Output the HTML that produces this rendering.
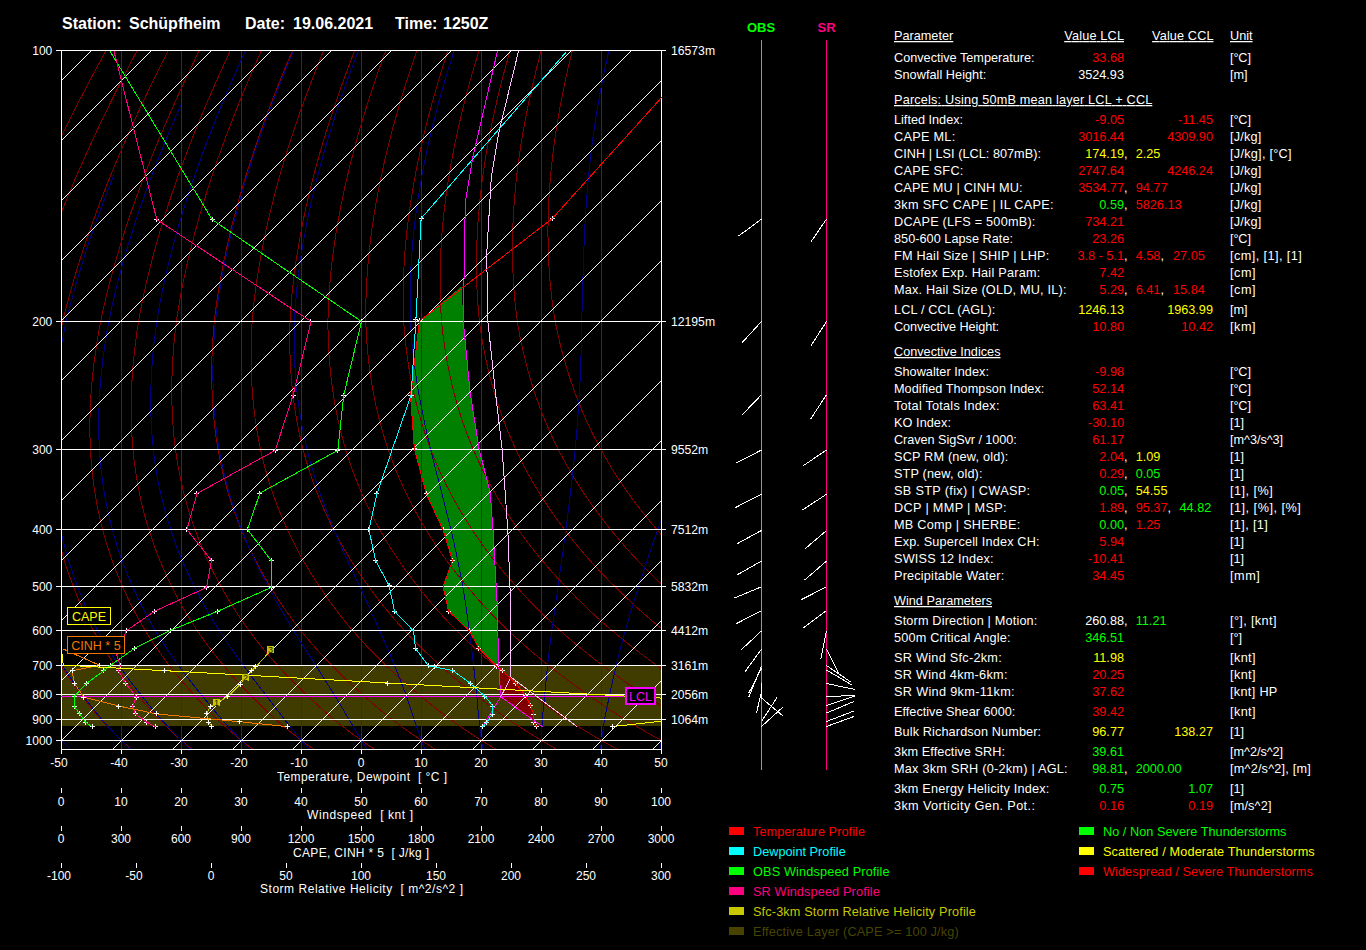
<!DOCTYPE html>
<html><head><meta charset="utf-8"><title>Skew-T Schüpfheim</title>
<style>
html,body{margin:0;padding:0;background:#000;width:1366px;height:950px;overflow:hidden}
svg{display:block;font-family:"Liberation Sans",sans-serif}
.tb text{font-size:12.7px}
</style></head><body>
<svg width="1366" height="950" viewBox="0 0 1366 950">
<rect width="1366" height="950" fill="#000"/>
<g shape-rendering="crispEdges">
<defs><clipPath id="pc"><rect x="61" y="50" width="601" height="700"/></clipPath></defs>
<rect x="61" y="665" width="601" height="61" fill="#403c00"/>
<polygon points="461.6,286.5 463.3,321.5 470,391.7 479.1,449 490.3,493.5 493,529.9 497,600.7 498.8,666.2 496.9,666.2 478.9,648.5 469.5,630.9 448.5,611.1 443.1,586.5 452.5,560.5 443.1,529.9 426.2,493.5 414.4,449 410.5,395.1 419.5,321" fill="#008000"/>
<polygon points="498.8,666.5 502.7,670.6 515.7,683.2 525.5,695.7 530.5,705.5 533.6,714 534.1,720.5 500.8,696.7" fill="#800000"/>
<path d="M121.5 50V749 M181.5 50V749 M241.5 50V749 M301.5 50V749 M361.5 50V749 M421.5 50V749 M481.5 50V749 M541.5 50V749 M601.5 50V749" stroke="#005000" stroke-width="1" fill="none"/>
<path clip-path="url(#pc)" d="M132.52 3.52 L128.48 10.55 L124.49 17.54 L120.56 24.49 L116.68 31.4 L112.84 38.27 L109.06 45.11 L105.32 51.92 L101.6 58.73 L97.92 65.5 L94.29 72.24 L90.72 78.94 L87.19 85.6 L83.72 92.22 L80.3 98.81 L76.92 105.37 L73.6 111.89 L70.32 118.37 L67.1 124.82 L63.92 131.23 L60.8 137.61 L57.72 143.95 L54.69 150.25 L51.72 156.53 L48.79 162.77 L45.91 168.97 L43.07 175.14 L40.29 181.28 L37.56 187.38 L34.87 193.45 L32.23 199.49 L29.64 205.49 L27.1 211.46 L24.6 217.4 L22.16 223.31 L19.76 229.18 L17.4 235.03 L15.1 240.84 L12.84 246.61 L10.63 252.36 L8.47 258.08 L6.35 263.76 L4.29 269.41 L2.26 275.04 L0.29 280.63 L-1.64 286.19 L-3.52 291.72 L-5.36 297.22 L-7.15 302.69 L-8.89 308.13 L-10.59 313.54 L-12.24 318.92 L-13.8 324.23 L-15.27 329.46 L-16.69 334.66 L-18.07 339.84 L-19.4 344.98 L-20.69 350.1 L-21.93 355.19 L-23.12 360.25 L-24.27 365.28 L-25.38 370.28 L-26.44 375.26 L-27.45 380.21 L-28.42 385.13 L-29.35 390.02 L-30.23 394.89 L-31.06 399.73 L-31.85 404.54 L-32.6 409.33 L-33.3 414.08 L-33.96 418.82 L-34.57 423.52 L-35.14 428.2 L-35.66 432.86 L-36.14 437.49 L-36.58 442.09 L-36.97 446.67 L-37.31 451.22 L-37.61 455.73 L-37.86 460.23 L-38.07 464.7 L-38.23 469.14 L-38.35 473.56 L-38.43 477.95 L-38.46 482.32 L-38.45 486.67 L-38.4 490.99 L-38.3 495.28 L-38.16 499.56 L-37.98 503.81 L-37.75 508.03 L-37.48 512.23 L-37.16 516.41 L-36.8 520.57 L-36.4 524.7 L-35.96 528.81 L-35.5 532.92 L-34.99 537.01 L-34.45 541.08 L-33.86 545.13 L-33.23 549.15 L-32.56 553.15 L-31.84 557.13 L-31.08 561.09 L-30.28 565.03 L-29.43 568.94 L-28.55 572.83 L-27.61 576.71 L-26.64 580.56 L-25.62 584.38 L-24.59 588.22 L-23.55 592.06 L-22.46 595.89 L-21.34 599.69 L-20.16 603.47 L-18.95 607.23 L-17.7 610.97 L-16.4 614.69 L-15.06 618.4 L-13.67 622.08 L-12.25 625.74 L-10.78 629.38 L-9.26 632.99 L-7.7 636.59 L-6.1 640.16 L-4.45 643.72 L-2.77 647.26 L-1.04 650.77 L0.74 654.27 L2.55 657.75 L4.41 661.21 L6.31 664.65 L8.23 668.09 L10.2 671.51 L12.2 674.92 L14.25 678.31 L16.34 681.68 L18.48 685.03 L20.65 688.36 L22.87 691.67 L25.12 694.98 L27.36 698.33 L29.63 701.66 L31.96 704.97 L34.32 708.26 L36.72 711.54 L39.17 714.8 L41.66 718.04 L44.24 721.23 L46.89 724.36 L49.59 727.47 L52.32 730.57 L55.11 733.65 L57.93 736.71 L60.8 739.76 L63.74 742.76 L66.74 745.73 L69.78 748.68 L72.86 751.62 M162.67 3.52 L158.77 10.55 L154.92 17.54 L151.12 24.49 L147.37 31.4 L143.68 38.27 L140.03 45.11 L136.43 51.92 L132.84 58.73 L129.3 65.5 L125.82 72.24 L122.38 78.94 L119 85.6 L115.66 92.22 L112.38 98.81 L109.15 105.37 L105.97 111.89 L102.84 118.37 L99.76 124.82 L96.73 131.23 L93.75 137.61 L90.82 143.95 L87.94 150.25 L85.11 156.53 L82.33 162.77 L79.59 168.97 L76.91 175.14 L74.28 181.28 L71.7 187.38 L69.16 193.45 L66.67 199.49 L64.24 205.49 L61.85 211.46 L59.51 217.4 L57.22 223.31 L54.97 229.18 L52.78 235.03 L50.63 240.84 L48.53 246.61 L46.48 252.36 L44.48 258.08 L42.52 263.76 L40.61 269.41 L38.75 275.04 L36.94 280.63 L35.17 286.19 L33.45 291.72 L31.78 297.22 L30.16 302.69 L28.58 308.13 L27.05 313.54 L25.56 318.92 L24.17 324.23 L22.87 329.46 L21.62 334.66 L20.41 339.84 L19.25 344.98 L18.14 350.1 L17.07 355.19 L16.05 360.25 L15.07 365.28 L14.14 370.28 L13.26 375.26 L12.42 380.21 L11.62 385.13 L10.88 390.02 L10.18 394.89 L9.52 399.73 L8.91 404.54 L8.34 409.33 L7.82 414.08 L7.35 418.82 L6.92 423.52 L6.54 428.2 L6.2 432.86 L5.9 437.49 L5.65 442.09 L5.45 446.67 L5.29 451.22 L5.19 455.73 L5.13 460.23 L5.11 464.7 L5.14 469.14 L5.21 473.56 L5.33 477.95 L5.49 482.32 L5.69 486.67 L5.94 490.99 L6.24 495.28 L6.58 499.56 L6.96 503.81 L7.39 508.03 L7.86 512.23 L8.38 516.41 L8.94 520.57 L9.54 524.7 L10.19 528.81 L10.86 532.92 L11.56 537.01 L12.31 541.08 L13.11 545.13 L13.95 549.15 L14.83 553.15 L15.76 557.13 L16.73 561.09 L17.75 565.03 L18.8 568.94 L19.91 572.83 L21.05 576.71 L22.24 580.56 L23.47 584.38 L24.73 588.22 L25.99 592.06 L27.29 595.89 L28.64 599.69 L30.03 603.47 L31.47 607.23 L32.95 610.97 L34.47 614.69 L36.04 618.4 L37.65 622.08 L39.31 625.74 L41 629.38 L42.75 632.99 L44.54 636.59 L46.38 640.16 L48.25 643.72 L50.17 647.26 L52.14 650.77 L54.15 654.27 L56.2 657.75 L58.3 661.21 L60.43 664.65 L62.6 668.09 L64.81 671.51 L67.05 674.92 L69.35 678.31 L71.68 681.68 L74.06 685.03 L76.49 688.36 L78.95 691.67 L81.45 694.98 L83.94 698.33 L86.47 701.66 L89.04 704.97 L91.66 708.26 L94.32 711.54 L97.02 714.8 L99.77 718.04 L102.6 721.23 L105.51 724.36 L108.47 727.47 L111.47 730.57 L114.51 733.65 L117.6 736.71 L120.73 739.76 L123.94 742.76 L127.2 745.73 L130.51 748.68 L133.87 751.62 M192.83 3.52 L189.06 10.55 L185.34 17.54 L181.68 24.49 L178.07 31.4 L174.51 38.27 L171 45.11 L167.54 51.92 L164.09 58.73 L160.69 65.5 L157.34 72.24 L154.04 78.94 L150.8 85.6 L147.61 92.22 L144.47 98.81 L141.38 105.37 L138.34 111.89 L135.35 118.37 L132.42 124.82 L129.53 131.23 L126.7 137.61 L123.92 143.95 L121.18 150.25 L118.5 156.53 L115.87 162.77 L113.28 168.97 L110.75 175.14 L108.27 181.28 L105.84 187.38 L103.45 193.45 L101.12 199.49 L98.83 205.49 L96.6 211.46 L94.41 217.4 L92.28 223.31 L90.19 229.18 L88.15 235.03 L86.16 240.84 L84.22 246.61 L82.32 252.36 L80.48 258.08 L78.68 263.76 L76.94 269.41 L75.24 275.04 L73.59 280.63 L71.98 286.19 L70.43 291.72 L68.92 297.22 L67.46 302.69 L66.05 308.13 L64.68 313.54 L63.37 318.92 L62.14 324.23 L61.01 329.46 L59.93 334.66 L58.89 339.84 L57.9 344.98 L56.96 350.1 L56.06 355.19 L55.21 360.25 L54.41 365.28 L53.66 370.28 L52.95 375.26 L52.28 380.21 L51.67 385.13 L51.1 390.02 L50.58 394.89 L50.1 399.73 L49.67 404.54 L49.29 409.33 L48.95 414.08 L48.66 418.82 L48.41 423.52 L48.21 428.2 L48.06 432.86 L47.95 437.49 L47.89 442.09 L47.87 446.67 L47.9 451.22 L47.98 455.73 L48.11 460.23 L48.29 464.7 L48.51 469.14 L48.77 473.56 L49.08 477.95 L49.44 482.32 L49.84 486.67 L50.29 490.99 L50.78 495.28 L51.31 499.56 L51.9 503.81 L52.52 508.03 L53.19 512.23 L53.91 516.41 L54.67 520.57 L55.48 524.7 L56.33 528.81 L57.21 532.92 L58.12 537.01 L59.08 541.08 L60.08 545.13 L61.13 549.15 L62.22 553.15 L63.36 557.13 L64.54 561.09 L65.77 565.03 L67.04 568.94 L68.36 572.83 L69.72 576.71 L71.12 580.56 L72.57 584.38 L74.04 588.22 L75.52 592.06 L77.05 595.89 L78.62 599.69 L80.23 603.47 L81.89 607.23 L83.6 610.97 L85.35 614.69 L87.14 618.4 L88.98 622.08 L90.86 625.74 L92.79 629.38 L94.76 632.99 L96.78 636.59 L98.85 640.16 L100.96 643.72 L103.12 647.26 L105.32 650.77 L107.56 654.27 L109.85 657.75 L112.18 661.21 L114.56 664.65 L116.97 668.09 L119.42 671.51 L121.91 674.92 L124.44 678.31 L127.02 681.68 L129.65 685.03 L132.32 688.36 L135.03 691.67 L137.78 694.98 L140.52 698.33 L143.3 701.66 L146.12 704.97 L148.99 708.26 L151.91 711.54 L154.87 714.8 L157.87 718.04 L160.96 721.23 L164.13 724.36 L167.35 727.47 L170.61 730.57 L173.92 733.65 L177.27 736.71 L180.67 739.76 L184.14 742.76 L187.67 745.73 L191.25 748.68 L194.87 751.62 M222.99 3.52 L219.35 10.55 L215.77 17.54 L212.24 24.49 L208.76 31.4 L205.34 38.27 L201.97 45.11 L198.64 51.92 L195.33 58.73 L192.07 65.5 L188.86 72.24 L185.71 78.94 L182.6 85.6 L179.55 92.22 L176.55 98.81 L173.61 105.37 L170.71 111.89 L167.87 118.37 L165.08 124.82 L162.34 131.23 L159.65 137.61 L157.01 143.95 L154.43 150.25 L151.89 156.53 L149.41 162.77 L146.97 168.97 L144.59 175.14 L142.26 181.28 L139.98 187.38 L137.74 193.45 L135.56 199.49 L133.43 205.49 L131.35 211.46 L129.32 217.4 L127.34 223.31 L125.4 229.18 L123.52 235.03 L121.69 240.84 L119.9 246.61 L118.17 252.36 L116.49 258.08 L114.85 263.76 L113.26 269.41 L111.72 275.04 L110.23 280.63 L108.79 286.19 L107.4 291.72 L106.06 297.22 L104.76 302.69 L103.52 308.13 L102.32 313.54 L101.17 318.92 L100.11 324.23 L99.15 329.46 L98.24 334.66 L97.37 339.84 L96.55 344.98 L95.78 350.1 L95.06 355.19 L94.38 360.25 L93.75 365.28 L93.17 370.28 L92.64 375.26 L92.15 380.21 L91.71 385.13 L91.32 390.02 L90.98 394.89 L90.68 399.73 L90.43 404.54 L90.23 409.33 L90.07 414.08 L89.96 418.82 L89.9 423.52 L89.89 428.2 L89.92 432.86 L89.99 437.49 L90.12 442.09 L90.29 446.67 L90.51 451.22 L90.78 455.73 L91.1 460.23 L91.47 464.7 L91.88 469.14 L92.33 473.56 L92.84 477.95 L93.39 482.32 L93.98 486.67 L94.63 490.99 L95.32 495.28 L96.05 499.56 L96.83 503.81 L97.66 508.03 L98.53 512.23 L99.45 516.41 L100.41 520.57 L101.42 524.7 L102.48 528.81 L103.56 532.92 L104.68 537.01 L105.84 541.08 L107.05 545.13 L108.31 549.15 L109.61 553.15 L110.96 557.13 L112.35 561.09 L113.79 565.03 L115.28 568.94 L116.81 572.83 L118.38 576.71 L120.01 580.56 L121.67 584.38 L123.36 588.22 L125.06 592.06 L126.81 595.89 L128.6 599.69 L130.43 603.47 L132.32 607.23 L134.24 610.97 L136.22 614.69 L138.24 618.4 L140.3 622.08 L142.41 625.74 L144.57 629.38 L146.77 632.99 L149.03 636.59 L151.32 640.16 L153.67 643.72 L156.06 647.26 L158.49 650.77 L160.97 654.27 L163.5 657.75 L166.07 661.21 L168.69 664.65 L171.34 668.09 L174.03 671.51 L176.76 674.92 L179.54 678.31 L182.36 681.68 L185.23 685.03 L188.15 688.36 L191.11 691.67 L194.11 694.98 L197.1 698.33 L200.13 701.66 L203.21 704.97 L206.33 708.26 L209.5 711.54 L212.71 714.8 L215.98 718.04 L219.33 721.23 L222.76 724.36 L226.23 727.47 L229.76 730.57 L233.32 733.65 L236.94 736.71 L240.6 739.76 L244.34 742.76 L248.14 745.73 L251.99 748.68 L255.88 751.62 M253.14 3.52 L249.64 10.55 L246.19 17.54 L242.8 24.49 L239.46 31.4 L236.17 38.27 L232.94 45.11 L229.75 51.92 L226.57 58.73 L223.45 65.5 L220.38 72.24 L217.37 78.94 L214.41 85.6 L211.5 92.22 L208.64 98.81 L205.84 105.37 L203.09 111.89 L200.39 118.37 L197.74 124.82 L195.14 131.23 L192.6 137.61 L190.11 143.95 L187.67 150.25 L185.28 156.53 L182.95 162.77 L180.66 168.97 L178.43 175.14 L176.25 181.28 L174.12 187.38 L172.04 193.45 L170.01 199.49 L168.03 205.49 L166.1 211.46 L164.22 217.4 L162.4 223.31 L160.62 229.18 L158.89 235.03 L157.22 240.84 L155.59 246.61 L154.02 252.36 L152.49 258.08 L151.01 263.76 L149.59 269.41 L148.21 275.04 L146.88 280.63 L145.61 286.19 L144.38 291.72 L143.2 297.22 L142.07 302.69 L140.99 308.13 L139.95 313.54 L138.97 318.92 L138.09 324.23 L137.29 329.46 L136.55 334.66 L135.85 339.84 L135.2 344.98 L134.6 350.1 L134.05 355.19 L133.55 360.25 L133.09 365.28 L132.69 370.28 L132.33 375.26 L132.02 380.21 L131.76 385.13 L131.55 390.02 L131.38 394.89 L131.26 399.73 L131.19 404.54 L131.17 409.33 L131.2 414.08 L131.27 418.82 L131.39 423.52 L131.56 428.2 L131.78 432.86 L132.04 437.49 L132.35 442.09 L132.71 446.67 L133.12 451.22 L133.58 455.73 L134.09 460.23 L134.64 464.7 L135.25 469.14 L135.9 473.56 L136.59 477.95 L137.34 482.32 L138.13 486.67 L138.97 490.99 L139.85 495.28 L140.79 499.56 L141.77 503.81 L142.79 508.03 L143.87 512.23 L144.99 516.41 L146.15 520.57 L147.37 524.7 L148.63 528.81 L149.91 532.92 L151.23 537.01 L152.61 541.08 L154.02 545.13 L155.49 549.15 L157 553.15 L158.56 557.13 L160.16 561.09 L161.82 565.03 L163.51 568.94 L165.26 572.83 L167.05 576.71 L168.89 580.56 L170.77 584.38 L172.68 588.22 L174.6 592.06 L176.56 595.89 L178.58 599.69 L180.63 603.47 L182.74 607.23 L184.89 610.97 L187.09 614.69 L189.33 618.4 L191.63 622.08 L193.96 625.74 L196.35 629.38 L198.78 632.99 L201.27 636.59 L203.8 640.16 L206.37 643.72 L209 647.26 L211.67 650.77 L214.39 654.27 L217.15 657.75 L219.96 661.21 L222.82 664.65 L225.71 668.09 L228.63 671.51 L231.61 674.92 L234.63 678.31 L237.7 681.68 L240.82 685.03 L243.98 688.36 L247.19 691.67 L250.44 694.98 L253.68 698.33 L256.96 701.66 L260.29 704.97 L263.67 708.26 L267.09 711.54 L270.56 714.8 L274.08 718.04 L277.69 721.23 L281.38 724.36 L285.12 727.47 L288.9 730.57 L292.73 733.65 L296.61 736.71 L300.54 739.76 L304.55 742.76 L308.61 745.73 L312.73 748.68 L316.89 751.62 M283.3 3.52 L279.93 10.55 L276.62 17.54 L273.36 24.49 L270.15 31.4 L267 38.27 L263.91 45.11 L260.86 51.92 L257.82 58.73 L254.84 65.5 L251.91 72.24 L249.03 78.94 L246.21 85.6 L243.44 92.22 L240.73 98.81 L238.07 105.37 L235.46 111.89 L232.9 118.37 L230.4 124.82 L227.95 131.23 L225.55 137.61 L223.21 143.95 L220.92 150.25 L218.68 156.53 L216.49 162.77 L214.35 168.97 L212.27 175.14 L210.24 181.28 L208.26 187.38 L206.33 193.45 L204.45 199.49 L202.63 205.49 L200.85 211.46 L199.13 217.4 L197.46 223.31 L195.84 229.18 L194.27 235.03 L192.75 240.84 L191.28 246.61 L189.86 252.36 L188.49 258.08 L187.18 263.76 L185.91 269.41 L184.7 275.04 L183.53 280.63 L182.42 286.19 L181.35 291.72 L180.34 297.22 L179.37 302.69 L178.46 308.13 L177.59 313.54 L176.78 318.92 L176.06 324.23 L175.43 329.46 L174.86 334.66 L174.33 339.84 L173.85 344.98 L173.42 350.1 L173.05 355.19 L172.72 360.25 L172.44 365.28 L172.2 370.28 L172.02 375.26 L171.89 380.21 L171.8 385.13 L171.77 390.02 L171.78 394.89 L171.84 399.73 L171.95 404.54 L172.11 409.33 L172.32 414.08 L172.58 418.82 L172.88 423.52 L173.23 428.2 L173.64 432.86 L174.08 437.49 L174.58 442.09 L175.13 446.67 L175.73 451.22 L176.38 455.73 L177.08 460.23 L177.82 464.7 L178.62 469.14 L179.46 473.56 L180.35 477.95 L181.29 482.32 L182.28 486.67 L183.31 490.99 L184.39 495.28 L185.52 499.56 L186.7 503.81 L187.93 508.03 L189.2 512.23 L190.52 516.41 L191.89 520.57 L193.31 524.7 L194.77 528.81 L196.26 532.92 L197.79 537.01 L199.37 541.08 L201 545.13 L202.67 549.15 L204.39 553.15 L206.16 557.13 L207.98 561.09 L209.84 565.03 L211.75 568.94 L213.71 572.83 L215.72 576.71 L217.77 580.56 L219.87 584.38 L222 588.22 L224.13 592.06 L226.32 595.89 L228.55 599.69 L230.83 603.47 L233.16 607.23 L235.54 610.97 L237.96 614.69 L240.43 618.4 L242.95 622.08 L245.52 625.74 L248.13 629.38 L250.8 632.99 L253.51 636.59 L256.27 640.16 L259.08 643.72 L261.94 647.26 L264.85 650.77 L267.8 654.27 L270.8 657.75 L273.85 661.21 L276.94 664.65 L280.07 668.09 L283.24 671.51 L286.46 674.92 L289.73 678.31 L293.04 681.68 L296.41 685.03 L299.82 688.36 L303.28 691.67 L306.77 694.98 L310.26 698.33 L313.79 701.66 L317.37 704.97 L321 708.26 L324.68 711.54 L328.41 714.8 L332.18 718.04 L336.05 721.23 L340 724.36 L344 727.47 L348.04 730.57 L352.14 733.65 L356.28 736.71 L360.47 739.76 L364.75 742.76 L369.08 745.73 L373.46 748.68 L377.89 751.62 M313.46 3.52 L310.22 10.55 L307.04 17.54 L303.92 24.49 L300.85 31.4 L297.84 38.27 L294.88 45.11 L291.96 51.92 L289.06 58.73 L286.22 65.5 L283.43 72.24 L280.69 78.94 L278.01 85.6 L275.39 92.22 L272.81 98.81 L270.3 105.37 L267.83 111.89 L265.42 118.37 L263.06 124.82 L260.76 131.23 L258.5 137.61 L256.31 143.95 L254.16 150.25 L252.07 156.53 L250.03 162.77 L248.04 168.97 L246.11 175.14 L244.23 181.28 L242.4 187.38 L240.62 193.45 L238.89 199.49 L237.22 205.49 L235.6 211.46 L234.03 217.4 L232.52 223.31 L231.05 229.18 L229.64 235.03 L228.28 240.84 L226.97 246.61 L225.71 252.36 L224.5 258.08 L223.34 263.76 L222.24 269.41 L221.18 275.04 L220.18 280.63 L219.23 286.19 L218.33 291.72 L217.48 297.22 L216.68 302.69 L215.93 308.13 L215.23 313.54 L214.58 318.92 L214.03 324.23 L213.57 329.46 L213.16 334.66 L212.81 339.84 L212.5 344.98 L212.25 350.1 L212.04 355.19 L211.88 360.25 L211.78 365.28 L211.72 370.28 L211.71 375.26 L211.76 380.21 L211.85 385.13 L211.99 390.02 L212.18 394.89 L212.42 399.73 L212.72 404.54 L213.06 409.33 L213.44 414.08 L213.88 418.82 L214.37 423.52 L214.91 428.2 L215.49 432.86 L216.13 437.49 L216.81 442.09 L217.55 446.67 L218.33 451.22 L219.17 455.73 L220.06 460.23 L221 464.7 L221.99 469.14 L223.02 473.56 L224.11 477.95 L225.24 482.32 L226.42 486.67 L227.65 490.99 L228.93 495.28 L230.26 499.56 L231.64 503.81 L233.06 508.03 L234.54 512.23 L236.06 516.41 L237.63 520.57 L239.25 524.7 L240.92 528.81 L242.61 532.92 L244.35 537.01 L246.13 541.08 L247.97 545.13 L249.85 549.15 L251.78 553.15 L253.76 557.13 L255.79 561.09 L257.86 565.03 L259.99 568.94 L262.16 572.83 L264.38 576.71 L266.65 580.56 L268.97 584.38 L271.31 588.22 L273.67 592.06 L276.08 595.89 L278.53 599.69 L281.03 603.47 L283.58 607.23 L286.18 610.97 L288.83 614.69 L291.53 618.4 L294.27 622.08 L297.07 625.74 L299.91 629.38 L302.81 632.99 L305.75 636.59 L308.75 640.16 L311.79 643.72 L314.88 647.26 L318.02 650.77 L321.21 654.27 L324.45 657.75 L327.74 661.21 L331.07 664.65 L334.44 668.09 L337.85 671.51 L341.31 674.92 L344.82 678.31 L348.38 681.68 L351.99 685.03 L355.65 688.36 L359.36 691.67 L363.1 694.98 L366.84 698.33 L370.62 701.66 L374.46 704.97 L378.34 708.26 L382.27 711.54 L386.26 714.8 L390.29 718.04 L394.41 721.23 L398.62 724.36 L402.88 727.47 L407.19 730.57 L411.54 733.65 L415.95 736.71 L420.41 739.76 L424.95 742.76 L429.55 745.73 L434.2 748.68 L438.9 751.62 M343.61 3.52 L340.51 10.55 L337.47 17.54 L334.48 24.49 L331.54 31.4 L328.67 38.27 L325.85 45.11 L323.07 51.92 L320.31 58.73 L317.6 65.5 L314.95 72.24 L312.36 78.94 L309.82 85.6 L307.33 92.22 L304.9 98.81 L302.52 105.37 L300.2 111.89 L297.93 118.37 L295.72 124.82 L293.56 131.23 L291.45 137.61 L289.4 143.95 L287.4 150.25 L285.46 156.53 L283.57 162.77 L281.73 168.97 L279.95 175.14 L278.21 181.28 L276.54 187.38 L274.91 193.45 L273.34 199.49 L271.82 205.49 L270.35 211.46 L268.94 217.4 L267.58 223.31 L266.27 229.18 L265.01 235.03 L263.81 240.84 L262.65 246.61 L261.55 252.36 L260.5 258.08 L259.51 263.76 L258.56 269.41 L257.67 275.04 L256.83 280.63 L256.04 286.19 L255.3 291.72 L254.61 297.22 L253.98 302.69 L253.4 308.13 L252.86 313.54 L252.38 318.92 L252 324.23 L251.71 329.46 L251.47 334.66 L251.29 339.84 L251.15 344.98 L251.07 350.1 L251.03 355.19 L251.05 360.25 L251.12 365.28 L251.24 370.28 L251.41 375.26 L251.62 380.21 L251.89 385.13 L252.21 390.02 L252.58 394.89 L253.01 399.73 L253.48 404.54 L254 409.33 L254.57 414.08 L255.19 418.82 L255.86 423.52 L256.58 428.2 L257.35 432.86 L258.18 437.49 L259.05 442.09 L259.97 446.67 L260.94 451.22 L261.97 455.73 L263.05 460.23 L264.18 464.7 L265.36 469.14 L266.59 473.56 L267.86 477.95 L269.19 482.32 L270.57 486.67 L271.99 490.99 L273.47 495.28 L275 499.56 L276.57 503.81 L278.2 508.03 L279.87 512.23 L281.6 516.41 L283.37 520.57 L285.19 524.7 L287.06 528.81 L288.96 532.92 L290.9 537.01 L292.9 541.08 L294.94 545.13 L297.03 549.15 L299.17 553.15 L301.36 557.13 L303.6 561.09 L305.89 565.03 L308.23 568.94 L310.61 572.83 L313.05 576.71 L315.54 580.56 L318.07 584.38 L320.63 588.22 L323.21 592.06 L325.83 595.89 L328.51 599.69 L331.23 603.47 L334.01 607.23 L336.83 610.97 L339.7 614.69 L342.63 618.4 L345.6 622.08 L348.62 625.74 L351.69 629.38 L354.82 632.99 L357.99 636.59 L361.22 640.16 L364.5 643.72 L367.82 647.26 L371.2 650.77 L374.62 654.27 L378.1 657.75 L381.62 661.21 L385.2 664.65 L388.81 668.09 L392.46 671.51 L396.17 674.92 L399.92 678.31 L403.72 681.68 L407.58 685.03 L411.48 688.36 L415.44 691.67 L419.43 694.98 L423.42 698.33 L427.45 701.66 L431.54 704.97 L435.68 708.26 L439.87 711.54 L444.11 714.8 L448.39 718.04 L452.78 721.23 L457.24 724.36 L461.76 727.47 L466.33 730.57 L470.95 733.65 L475.62 736.71 L480.34 739.76 L485.15 742.76 L490.02 745.73 L494.94 748.68 L499.91 751.62 M373.77 3.52 L370.8 10.55 L367.89 17.54 L365.04 24.49 L362.24 31.4 L359.5 38.27 L356.81 45.11 L354.18 51.92 L351.55 58.73 L348.99 65.5 L346.48 72.24 L344.02 78.94 L341.62 85.6 L339.28 92.22 L336.99 98.81 L334.75 105.37 L332.57 111.89 L330.45 118.37 L328.38 124.82 L326.37 131.23 L324.41 137.61 L322.5 143.95 L320.65 150.25 L318.85 156.53 L317.11 162.77 L315.42 168.97 L313.78 175.14 L312.2 181.28 L310.68 187.38 L309.2 193.45 L307.78 199.49 L306.42 205.49 L305.1 211.46 L303.84 217.4 L302.64 223.31 L301.48 229.18 L300.38 235.03 L299.33 240.84 L298.34 246.61 L297.4 252.36 L296.51 258.08 L295.67 263.76 L294.89 269.41 L294.16 275.04 L293.48 280.63 L292.85 286.19 L292.28 291.72 L291.75 297.22 L291.28 302.69 L290.87 308.13 L290.5 313.54 L290.19 318.92 L289.97 324.23 L289.85 329.46 L289.78 334.66 L289.77 339.84 L289.8 344.98 L289.89 350.1 L290.03 355.19 L290.22 360.25 L290.46 365.28 L290.75 370.28 L291.1 375.26 L291.49 380.21 L291.94 385.13 L292.44 390.02 L292.99 394.89 L293.59 399.73 L294.24 404.54 L294.94 409.33 L295.69 414.08 L296.5 418.82 L297.35 423.52 L298.26 428.2 L299.21 432.86 L300.22 437.49 L301.28 442.09 L302.39 446.67 L303.55 451.22 L304.77 455.73 L306.04 460.23 L307.36 464.7 L308.73 469.14 L310.15 473.56 L311.62 477.95 L313.14 482.32 L314.71 486.67 L316.34 490.99 L318.01 495.28 L319.73 499.56 L321.51 503.81 L323.33 508.03 L325.21 512.23 L327.13 516.41 L329.11 520.57 L331.13 524.7 L333.21 528.81 L335.31 532.92 L337.46 537.01 L339.66 541.08 L341.91 545.13 L344.21 549.15 L346.56 553.15 L348.96 557.13 L351.41 561.09 L353.91 565.03 L356.46 568.94 L359.06 572.83 L361.72 576.71 L364.42 580.56 L367.17 584.38 L369.95 588.22 L372.74 592.06 L375.59 595.89 L378.49 599.69 L381.43 603.47 L384.43 607.23 L387.48 610.97 L390.58 614.69 L393.72 618.4 L396.92 622.08 L400.17 625.74 L403.47 629.38 L406.83 632.99 L410.24 636.59 L413.7 640.16 L417.2 643.72 L420.76 647.26 L424.38 650.77 L428.04 654.27 L431.75 657.75 L435.51 661.21 L439.33 664.65 L443.18 668.09 L447.07 671.51 L451.02 674.92 L455.02 678.31 L459.06 681.68 L463.16 685.03 L467.32 688.36 L471.52 691.67 L475.76 694.98 L480 698.33 L484.29 701.66 L488.63 704.97 L493.02 708.26 L497.46 711.54 L501.95 714.8 L506.5 718.04 L511.14 721.23 L515.87 724.36 L520.64 727.47 L525.47 730.57 L530.36 733.65 L535.29 736.71 L540.28 739.76 L545.35 742.76 L550.49 745.73 L555.68 748.68 L560.92 751.62 M403.93 3.52 L401.09 10.55 L398.32 17.54 L395.6 24.49 L392.94 31.4 L390.33 38.27 L387.78 45.11 L385.28 51.92 L382.8 58.73 L380.37 65.5 L378 72.24 L375.68 78.94 L373.42 85.6 L371.22 92.22 L369.07 98.81 L366.98 105.37 L364.95 111.89 L362.97 118.37 L361.04 124.82 L359.17 131.23 L357.36 137.61 L355.6 143.95 L353.89 150.25 L352.24 156.53 L350.65 162.77 L349.11 168.97 L347.62 175.14 L346.19 181.28 L344.82 187.38 L343.49 193.45 L342.23 199.49 L341.01 205.49 L339.85 211.46 L338.75 217.4 L337.7 223.31 L336.7 229.18 L335.75 235.03 L334.86 240.84 L334.03 246.61 L333.24 252.36 L332.51 258.08 L331.84 263.76 L331.21 269.41 L330.64 275.04 L330.13 280.63 L329.66 286.19 L329.25 291.72 L328.89 297.22 L328.59 302.69 L328.34 308.13 L328.14 313.54 L327.99 318.92 L327.94 324.23 L327.99 329.46 L328.09 334.66 L328.25 339.84 L328.45 344.98 L328.71 350.1 L329.02 355.19 L329.39 360.25 L329.8 365.28 L330.27 370.28 L330.79 375.26 L331.36 380.21 L331.98 385.13 L332.66 390.02 L333.39 394.89 L334.17 399.73 L335 404.54 L335.88 409.33 L336.82 414.08 L337.8 418.82 L338.84 423.52 L339.93 428.2 L341.07 432.86 L342.27 437.49 L343.51 442.09 L344.81 446.67 L346.16 451.22 L347.57 455.73 L349.03 460.23 L350.54 464.7 L352.1 469.14 L353.71 473.56 L355.38 477.95 L357.09 482.32 L358.86 486.67 L360.68 490.99 L362.55 495.28 L364.47 499.56 L366.44 503.81 L368.47 508.03 L370.54 512.23 L372.67 516.41 L374.85 520.57 L377.08 524.7 L379.36 528.81 L381.66 532.92 L384.02 537.01 L386.42 541.08 L388.88 545.13 L391.39 549.15 L393.95 553.15 L396.56 557.13 L399.22 561.09 L401.93 565.03 L404.7 568.94 L407.52 572.83 L410.38 576.71 L413.3 580.56 L416.27 584.38 L419.27 588.22 L422.28 592.06 L425.35 595.89 L428.46 599.69 L431.63 603.47 L434.85 607.23 L438.12 610.97 L441.45 614.69 L444.82 618.4 L448.25 622.08 L451.73 625.74 L455.25 629.38 L458.84 632.99 L462.48 636.59 L466.17 640.16 L469.91 643.72 L473.71 647.26 L477.55 650.77 L481.45 654.27 L485.4 657.75 L489.4 661.21 L493.45 664.65 L497.54 668.09 L501.68 671.51 L505.87 674.92 L510.11 678.31 L514.4 681.68 L518.75 685.03 L523.15 688.36 L527.6 691.67 L532.09 694.98 L536.58 698.33 L541.12 701.66 L545.71 704.97 L550.35 708.26 L555.05 711.54 L559.8 714.8 L564.6 718.04 L569.5 721.23 L574.49 724.36 L579.53 727.47 L584.62 730.57 L589.76 733.65 L594.96 736.71 L600.21 739.76 L605.55 742.76 L610.96 745.73 L616.41 748.68 L621.92 751.62 M434.08 3.52 L431.38 10.55 L428.74 17.54 L426.16 24.49 L423.63 31.4 L421.16 38.27 L418.75 45.11 L416.39 51.92 L414.04 58.73 L411.75 65.5 L409.52 72.24 L407.35 78.94 L405.23 85.6 L403.17 92.22 L401.16 98.81 L399.21 105.37 L397.32 111.89 L395.48 118.37 L393.7 124.82 L391.98 131.23 L390.31 137.61 L388.69 143.95 L387.14 150.25 L385.64 156.53 L384.19 162.77 L382.8 168.97 L381.46 175.14 L380.18 181.28 L378.96 187.38 L377.79 193.45 L376.67 199.49 L375.61 205.49 L374.6 211.46 L373.65 217.4 L372.76 223.31 L371.91 229.18 L371.13 235.03 L370.39 240.84 L369.71 246.61 L369.09 252.36 L368.52 258.08 L368 263.76 L367.54 269.41 L367.13 275.04 L366.78 280.63 L366.47 286.19 L366.23 291.72 L366.03 297.22 L365.89 302.69 L365.81 308.13 L365.77 313.54 L365.79 318.92 L365.91 324.23 L366.13 329.46 L366.4 334.66 L366.73 339.84 L367.1 344.98 L367.53 350.1 L368.02 355.19 L368.55 360.25 L369.14 365.28 L369.79 370.28 L370.48 375.26 L371.23 380.21 L372.03 385.13 L372.88 390.02 L373.79 394.89 L374.75 399.73 L375.76 404.54 L376.82 409.33 L377.94 414.08 L379.11 418.82 L380.33 423.52 L381.61 428.2 L382.93 432.86 L384.31 437.49 L385.74 442.09 L387.23 446.67 L388.77 451.22 L390.36 455.73 L392.01 460.23 L393.71 464.7 L395.47 469.14 L397.27 473.56 L399.13 477.95 L401.04 482.32 L403.01 486.67 L405.02 490.99 L407.09 495.28 L409.21 499.56 L411.38 503.81 L413.6 508.03 L415.88 512.23 L418.21 516.41 L420.59 520.57 L423.02 524.7 L425.5 528.81 L428.01 532.92 L430.58 537.01 L433.19 541.08 L435.85 545.13 L438.57 549.15 L441.34 553.15 L444.16 557.13 L447.03 561.09 L449.96 565.03 L452.94 568.94 L455.97 572.83 L459.05 576.71 L462.18 580.56 L465.37 584.38 L468.59 588.22 L471.82 592.06 L475.1 595.89 L478.44 599.69 L481.83 603.47 L485.28 607.23 L488.77 610.97 L492.32 614.69 L495.92 618.4 L499.57 622.08 L503.28 625.74 L507.04 629.38 L510.85 632.99 L514.72 636.59 L518.64 640.16 L522.62 643.72 L526.65 647.26 L530.73 650.77 L534.86 654.27 L539.05 657.75 L543.29 661.21 L547.58 664.65 L551.91 668.09 L556.29 671.51 L560.72 674.92 L565.21 678.31 L569.75 681.68 L574.34 685.03 L578.98 688.36 L583.68 691.67 L588.42 694.98 L593.16 698.33 L597.95 701.66 L602.79 704.97 L607.69 708.26 L612.64 711.54 L617.65 714.8 L622.71 718.04 L627.86 721.23 L633.11 724.36 L638.41 727.47 L643.76 730.57 L649.17 733.65 L654.63 736.71 L660.15 739.76 L665.75 742.76 L671.42 745.73 L677.15 748.68 L682.93 751.62 M464.24 3.52 L461.67 10.55 L459.17 17.54 L456.72 24.49 L454.33 31.4 L451.99 38.27 L449.72 45.11 L447.49 51.92 L445.29 58.73 L443.14 65.5 L441.04 72.24 L439.01 78.94 L437.03 85.6 L435.11 92.22 L433.25 98.81 L431.44 105.37 L429.69 111.89 L428 118.37 L426.36 124.82 L424.78 131.23 L423.26 137.61 L421.79 143.95 L420.38 150.25 L419.03 156.53 L417.73 162.77 L416.49 168.97 L415.3 175.14 L414.17 181.28 L413.1 187.38 L412.08 193.45 L411.12 199.49 L410.21 205.49 L409.36 211.46 L408.56 217.4 L407.82 223.31 L407.13 229.18 L406.5 235.03 L405.92 240.84 L405.4 246.61 L404.93 252.36 L404.52 258.08 L404.17 263.76 L403.86 269.41 L403.62 275.04 L403.42 280.63 L403.29 286.19 L403.2 291.72 L403.17 297.22 L403.2 302.69 L403.27 308.13 L403.41 313.54 L403.6 318.92 L403.88 324.23 L404.27 329.46 L404.71 334.66 L405.21 339.84 L405.75 344.98 L406.36 350.1 L407.01 355.19 L407.72 360.25 L408.48 365.28 L409.3 370.28 L410.17 375.26 L411.1 380.21 L412.07 385.13 L413.11 390.02 L414.19 394.89 L415.33 399.73 L416.52 404.54 L417.77 409.33 L419.07 414.08 L420.42 418.82 L421.82 423.52 L423.28 428.2 L424.79 432.86 L426.36 437.49 L427.98 442.09 L429.65 446.67 L431.38 451.22 L433.16 455.73 L435 460.23 L436.89 464.7 L438.84 469.14 L440.84 473.56 L442.89 477.95 L444.99 482.32 L447.15 486.67 L449.36 490.99 L451.63 495.28 L453.94 499.56 L456.31 503.81 L458.74 508.03 L461.21 512.23 L463.74 516.41 L466.32 520.57 L468.96 524.7 L471.65 528.81 L474.37 532.92 L477.13 537.01 L479.95 541.08 L482.82 545.13 L485.75 549.15 L488.73 553.15 L491.76 557.13 L494.84 561.09 L497.98 565.03 L501.17 568.94 L504.42 572.83 L507.72 576.71 L511.07 580.56 L514.47 584.38 L517.9 588.22 L521.36 592.06 L524.86 595.89 L528.42 599.69 L532.03 603.47 L535.7 607.23 L539.42 610.97 L543.19 614.69 L547.02 618.4 L550.9 622.08 L554.83 625.74 L558.82 629.38 L562.86 632.99 L566.96 636.59 L571.12 640.16 L575.33 643.72 L579.59 647.26 L583.9 650.77 L588.28 654.27 L592.7 657.75 L597.18 661.21 L601.71 664.65 L606.28 668.09 L610.9 671.51 L615.57 674.92 L620.3 678.31 L625.09 681.68 L629.92 685.03 L634.81 688.36 L639.76 691.67 L644.75 694.98 L649.74 698.33 L654.78 701.66 L659.88 704.97 L665.03 708.26 L670.23 711.54 L675.5 714.8 L680.81 718.04 L686.23 721.23 L691.73 724.36 L697.29 727.47 L702.91 730.57 L708.58 733.65 L714.3 736.71 L720.08 739.76 L725.96 742.76 L731.89 745.73 L737.89 748.68 L743.94 751.62 M494.39 3.52 L491.96 10.55 L489.59 17.54 L487.28 24.49 L485.02 31.4 L482.83 38.27 L480.69 45.11 L478.6 51.92 L476.53 58.73 L474.52 65.5 L472.57 72.24 L470.67 78.94 L468.83 85.6 L467.05 92.22 L465.33 98.81 L463.67 105.37 L462.06 111.89 L460.51 118.37 L459.02 124.82 L457.59 131.23 L456.21 137.61 L454.89 143.95 L453.63 150.25 L452.42 156.53 L451.27 162.77 L450.18 168.97 L449.14 175.14 L448.16 181.28 L447.24 187.38 L446.37 193.45 L445.56 199.49 L444.8 205.49 L444.11 211.46 L443.46 217.4 L442.88 223.31 L442.35 229.18 L441.87 235.03 L441.45 240.84 L441.09 246.61 L440.78 252.36 L440.53 258.08 L440.33 263.76 L440.19 269.41 L440.1 275.04 L440.07 280.63 L440.1 286.19 L440.18 291.72 L440.31 297.22 L440.5 302.69 L440.74 308.13 L441.04 313.54 L441.4 318.92 L441.86 324.23 L442.41 329.46 L443.02 334.66 L443.68 339.84 L444.4 344.98 L445.18 350.1 L446.01 355.19 L446.89 360.25 L447.83 365.28 L448.82 370.28 L449.86 375.26 L450.97 380.21 L452.12 385.13 L453.33 390.02 L454.59 394.89 L455.91 399.73 L457.28 404.54 L458.71 409.33 L460.19 414.08 L461.72 418.82 L463.31 423.52 L464.96 428.2 L466.65 432.86 L468.4 437.49 L470.21 442.09 L472.07 446.67 L473.98 451.22 L475.96 455.73 L477.99 460.23 L480.07 464.7 L482.21 469.14 L484.4 473.56 L486.64 477.95 L488.94 482.32 L491.3 486.67 L493.7 490.99 L496.16 495.28 L498.68 499.56 L501.25 503.81 L503.87 508.03 L506.55 512.23 L509.28 516.41 L512.06 520.57 L514.9 524.7 L517.79 528.81 L520.72 532.92 L523.69 537.01 L526.71 541.08 L529.79 545.13 L532.93 549.15 L536.12 553.15 L539.36 557.13 L542.66 561.09 L546.01 565.03 L549.41 568.94 L552.87 572.83 L556.38 576.71 L559.95 580.56 L563.57 584.38 L567.22 588.22 L570.89 592.06 L574.62 595.89 L578.4 599.69 L582.23 603.47 L586.12 607.23 L590.06 610.97 L594.06 614.69 L598.11 618.4 L602.22 622.08 L606.38 625.74 L610.6 629.38 L614.87 632.99 L619.21 636.59 L623.59 640.16 L628.03 643.72 L632.53 647.26 L637.08 650.77 L641.69 654.27 L646.35 657.75 L651.07 661.21 L655.84 664.65 L660.65 668.09 L665.51 671.51 L670.43 674.92 L675.4 678.31 L680.43 681.68 L685.51 685.03 L690.65 688.36 L695.84 691.67 L701.08 694.98 L706.32 698.33 L711.61 701.66 L716.96 704.97 L722.37 708.26 L727.83 711.54 L733.34 714.8 L738.92 718.04 L744.59 721.23 L750.35 724.36 L756.17 727.47 L762.05 730.57 L767.98 733.65 L773.97 736.71 L780.02 739.76 L786.16 742.76 L792.36 745.73 L798.63 748.68 L804.94 751.62 M524.55 3.52 L522.25 10.55 L520.02 17.54 L517.84 24.49 L515.72 31.4 L513.66 38.27 L511.66 45.11 L509.71 51.92 L507.78 58.73 L505.9 65.5 L504.09 72.24 L502.33 78.94 L500.64 85.6 L499 92.22 L497.42 98.81 L495.9 105.37 L494.43 111.89 L493.03 118.37 L491.68 124.82 L490.39 131.23 L489.16 137.61 L487.99 143.95 L486.87 150.25 L485.81 156.53 L484.81 162.77 L483.87 168.97 L482.98 175.14 L482.15 181.28 L481.38 187.38 L480.66 193.45 L480 199.49 L479.4 205.49 L478.86 211.46 L478.37 217.4 L477.94 223.31 L477.56 229.18 L477.24 235.03 L476.98 240.84 L476.78 246.61 L476.63 252.36 L476.53 258.08 L476.5 263.76 L476.51 269.41 L476.59 275.04 L476.72 280.63 L476.91 286.19 L477.15 291.72 L477.45 297.22 L477.8 302.69 L478.21 308.13 L478.68 313.54 L479.2 318.92 L479.83 324.23 L480.55 329.46 L481.33 334.66 L482.16 339.84 L483.05 344.98 L484 350.1 L485 355.19 L486.06 360.25 L487.17 365.28 L488.33 370.28 L489.56 375.26 L490.83 380.21 L492.17 385.13 L493.55 390.02 L494.99 394.89 L496.49 399.73 L498.04 404.54 L499.65 409.33 L501.31 414.08 L503.03 418.82 L504.8 423.52 L506.63 428.2 L508.51 432.86 L510.45 437.49 L512.44 442.09 L514.49 446.67 L516.59 451.22 L518.76 455.73 L520.98 460.23 L523.25 464.7 L525.58 469.14 L527.96 473.56 L530.4 477.95 L532.89 482.32 L535.44 486.67 L538.05 490.99 L540.7 495.28 L543.42 499.56 L546.18 503.81 L549.01 508.03 L551.88 512.23 L554.81 516.41 L557.8 520.57 L560.84 524.7 L563.94 528.81 L567.07 532.92 L570.25 537.01 L573.48 541.08 L576.77 545.13 L580.11 549.15 L583.51 553.15 L586.96 557.13 L590.47 561.09 L594.03 565.03 L597.65 568.94 L601.32 572.83 L605.05 576.71 L608.83 580.56 L612.67 584.38 L616.54 588.22 L620.43 592.06 L624.37 595.89 L628.38 599.69 L632.43 603.47 L636.54 607.23 L640.71 610.97 L644.93 614.69 L649.21 618.4 L653.55 622.08 L657.93 625.74 L662.38 629.38 L666.89 632.99 L671.45 636.59 L676.07 640.16 L680.74 643.72 L685.47 647.26 L690.26 650.77 L695.1 654.27 L700 657.75 L704.95 661.21 L709.97 664.65 L715.02 668.09 L720.12 671.51 L725.28 674.92 L730.49 678.31 L735.77 681.68 L741.09 685.03 L746.48 688.36 L751.92 691.67 L757.41 694.98 L762.9 698.33 L768.44 701.66 L774.04 704.97 L779.7 708.26 L785.42 711.54 L791.19 714.8 L797.02 718.04 L802.95 721.23 L808.98 724.36 L815.06 727.47 L821.19 730.57 L827.39 733.65 L833.64 736.71 L839.96 739.76 L846.36 742.76 L852.83 745.73 L859.36 748.68 L865.95 751.62 M554.71 3.52 L552.54 10.55 L550.44 17.54 L548.4 24.49 L546.41 31.4 L544.49 38.27 L542.63 45.11 L540.81 51.92 L539.02 58.73 L537.29 65.5 L535.61 72.24 L534 78.94 L532.44 85.6 L530.94 92.22 L529.51 98.81 L528.13 105.37 L526.81 111.89 L525.55 118.37 L524.34 124.82 L523.2 131.23 L522.11 137.61 L521.08 143.95 L520.12 150.25 L519.2 156.53 L518.35 162.77 L517.56 168.97 L516.82 175.14 L516.14 181.28 L515.52 187.38 L514.95 193.45 L514.45 199.49 L514 205.49 L513.61 211.46 L513.27 217.4 L513 223.31 L512.78 229.18 L512.62 235.03 L512.51 240.84 L512.46 246.61 L512.47 252.36 L512.54 258.08 L512.66 263.76 L512.84 269.41 L513.08 275.04 L513.37 280.63 L513.72 286.19 L514.13 291.72 L514.59 297.22 L515.11 302.69 L515.68 308.13 L516.32 313.54 L517.01 318.92 L517.8 324.23 L518.69 329.46 L519.64 334.66 L520.64 339.84 L521.7 344.98 L522.82 350.1 L523.99 355.19 L525.22 360.25 L526.51 365.28 L527.85 370.28 L529.25 375.26 L530.7 380.21 L532.21 385.13 L533.78 390.02 L535.4 394.89 L537.07 399.73 L538.81 404.54 L540.59 409.33 L542.44 414.08 L544.34 418.82 L546.29 423.52 L548.3 428.2 L550.37 432.86 L552.49 437.49 L554.67 442.09 L556.91 446.67 L559.2 451.22 L561.55 455.73 L563.96 460.23 L566.43 464.7 L568.95 469.14 L571.52 473.56 L574.16 477.95 L576.84 482.32 L579.59 486.67 L582.39 490.99 L585.24 495.28 L588.15 499.56 L591.12 503.81 L594.14 508.03 L597.22 512.23 L600.35 516.41 L603.54 520.57 L606.79 524.7 L610.09 528.81 L613.42 532.92 L616.8 537.01 L620.24 541.08 L623.74 545.13 L627.29 549.15 L630.9 553.15 L634.56 557.13 L638.28 561.09 L642.05 565.03 L645.88 568.94 L649.77 572.83 L653.72 576.71 L657.71 580.56 L661.77 584.38 L665.86 588.22 L669.97 592.06 L674.13 595.89 L678.35 599.69 L682.63 603.47 L686.97 607.23 L691.36 610.97 L695.8 614.69 L700.31 618.4 L704.87 622.08 L709.49 625.74 L714.16 629.38 L718.9 632.99 L723.69 636.59 L728.54 640.16 L733.45 643.72 L738.41 647.26 L743.43 650.77 L748.51 654.27 L753.65 657.75 L758.84 661.21 L764.09 664.65 L769.38 668.09 L774.73 671.51 L780.13 674.92 L785.59 678.31 L791.11 681.68 L796.68 685.03 L802.31 688.36 L808 691.67 L813.74 694.98 L819.48 698.33 L825.27 701.66 L831.13 704.97 L837.04 708.26 L843.01 711.54 L849.04 714.8 L855.13 718.04 L861.32 721.23 L867.6 724.36 L873.94 727.47 L880.34 730.57 L886.8 733.65 L893.31 736.71 L899.89 739.76 L906.56 742.76 L913.3 745.73 L920.1 748.68 L926.96 751.62 M584.86 3.52 L582.83 10.55 L580.86 17.54 L578.96 24.49 L577.11 31.4 L575.32 38.27 L573.6 45.11 L571.92 51.92 L570.26 58.73 L568.67 65.5 L567.13 72.24 L565.66 78.94 L564.24 85.6 L562.89 92.22 L561.59 98.81 L560.36 105.37 L559.18 111.89 L558.06 118.37 L557 124.82 L556 131.23 L555.06 137.61 L554.18 143.95 L553.36 150.25 L552.6 156.53 L551.89 162.77 L551.24 168.97 L550.66 175.14 L550.13 181.28 L549.66 187.38 L549.25 193.45 L548.89 199.49 L548.6 205.49 L548.36 211.46 L548.18 217.4 L548.06 223.31 L547.99 229.18 L547.99 235.03 L548.04 240.84 L548.15 246.61 L548.32 252.36 L548.54 258.08 L548.83 263.76 L549.17 269.41 L549.56 275.04 L550.02 280.63 L550.53 286.19 L551.1 291.72 L551.73 297.22 L552.41 302.69 L553.15 308.13 L553.95 313.54 L554.81 318.92 L555.77 324.23 L556.83 329.46 L557.95 334.66 L559.12 339.84 L560.35 344.98 L561.64 350.1 L562.99 355.19 L564.39 360.25 L565.85 365.28 L567.37 370.28 L568.94 375.26 L570.57 380.21 L572.26 385.13 L574 390.02 L575.8 394.89 L577.65 399.73 L579.57 404.54 L581.54 409.33 L583.56 414.08 L585.64 418.82 L587.78 423.52 L589.98 428.2 L592.23 432.86 L594.54 437.49 L596.9 442.09 L599.33 446.67 L601.81 451.22 L604.35 455.73 L606.95 460.23 L609.61 464.7 L612.32 469.14 L615.09 473.56 L617.91 477.95 L620.8 482.32 L623.73 486.67 L626.73 490.99 L629.78 495.28 L632.89 499.56 L636.05 503.81 L639.28 508.03 L642.55 512.23 L645.89 516.41 L649.28 520.57 L652.73 524.7 L656.23 528.81 L659.77 532.92 L663.36 537.01 L667.01 541.08 L670.71 545.13 L674.47 549.15 L678.29 553.15 L682.16 557.13 L686.09 561.09 L690.08 565.03 L694.12 568.94 L698.22 572.83 L702.38 576.71 L706.6 580.56 L710.87 584.38 L715.17 588.22 L719.5 592.06 L723.89 595.89 L728.33 599.69 L732.83 603.47 L737.39 607.23 L742 610.97 L746.68 614.69 L751.41 618.4 L756.19 622.08 L761.04 625.74 L765.94 629.38 L770.91 632.99 L775.93 636.59 L781.02 640.16 L786.16 643.72 L791.35 647.26 L796.61 650.77 L801.93 654.27 L807.3 657.75 L812.73 661.21 L818.22 664.65 L823.75 668.09 L829.34 671.51 L834.98 674.92 L840.68 678.31 L846.45 681.68 L852.27 685.03 L858.15 688.36 L864.08 691.67 L870.07 694.98 L876.06 698.33 L882.11 701.66 L888.21 704.97 L894.38 708.26 L900.6 711.54 L906.89 714.8 L913.23 718.04 L919.68 721.23 L926.22 724.36 L932.82 727.47 L939.48 730.57 L946.2 733.65 L952.98 736.71 L959.83 739.76 L966.76 742.76 L973.77 745.73 L980.84 748.68 L987.97 751.62" stroke="#800000" stroke-width="1" fill="none"/>
<path clip-path="url(#pc)" d="M11.75 751.62 L8.97 748.68 L6.22 745.73 L3.52 742.76 L1.5 740.5 L0.87 739.76 L-1.71 736.71 L-4.25 733.65 L-6.75 730.57 L-9.21 727.47 L-11.63 724.36 L-14.01 721.23 L-16.31 718.04 L-18.53 714.8 L-20.71 711.54 L-22.85 708.26 L-24.95 704.97 L-27.01 701.66 L-29.03 698.33 L-31 694.98 L-33 691.67 L-34.96 688.36 L-36.88 685.03 L-38.76 681.68 L-40.6 678.31 L-42.4 674.92 L-44.16 671.51 L-45.87 668.09 L-47.55 664.65 L-49.21 661.21 L-50.82 657.75 L-52.4 654.27 L-53.93 650.77 L-55.42 647.26 L-56.87 643.72 L-58.27 640.16 L-59.64 636.59 L-60.96 632.99 L-62.25 629.38 L-63.48 625.74 L-64.68 622.08 L-65.83 618.4 L-66.94 614.69 L-68.01 610.97 L-69.04 607.23 L-70.03 603.47 L-70.97 599.69 L-71.88 595.89 L-72.74 592.06 L-73.56 588.22 L-74.37 584.38 L-75.17 580.56 L-75.92 576.71 L-76.63 572.83 L-77.3 568.94 L-77.93 565.03 L-78.52 561.09 L-79.06 557.13 L-79.57 553.15 L-80.03 549.15 L-80.45 545.13 L-80.83 541.08 L-81.16 537.01 L-81.45 532.92 L-81.71 528.81 L-81.95 524.7 L-82.14 520.57 L-82.3 516.41 L-82.41 512.23 L-82.47 508.03 L-82.5 503.81 L-82.48 499.56 L-82.42 495.28 L-82.32 490.99 L-82.18 486.67 L-81.99 482.32 L-81.76 477.95 L-81.49 473.56 L-81.18 469.14 L-80.82 464.7 L-80.42 460.23 L-79.97 455.73 L-79.49 451.22 L-78.95 446.67 L-78.37 442.09 L-77.74 437.49 L-77.08 432.86 L-76.37 428.2 L-75.61 423.52 L-74.81 418.82 L-73.97 414.08 L-73.08 409.33 L-72.16 404.54 L-71.18 399.73 L-70.17 394.89 L-69.11 390.02 L-68 385.13 L-66.85 380.21 L-65.66 375.26 L-64.42 370.28 L-63.14 365.28 L-61.82 360.25 L-60.45 355.19 L-59.03 350.1 L-57.57 344.98 M72.58 751.62 L69.58 748.68 L66.62 745.73 L63.69 742.76 L61.5 740.5 L60.81 739.76 L58 736.71 L55.23 733.65 L52.5 730.57 L49.81 727.47 L47.15 724.36 L44.54 721.23 L41.99 718.04 L39.54 714.8 L37.12 711.54 L34.74 708.26 L32.4 704.97 L30.1 701.66 L27.84 698.33 L25.63 694.98 L23.39 691.67 L21.19 688.36 L19.03 685.03 L16.91 681.68 L14.83 678.31 L12.79 674.92 L10.79 671.51 L8.84 668.09 L6.92 664.65 L5.03 661.21 L3.18 657.75 L1.37 654.27 L-0.39 650.77 L-2.12 647.26 L-3.8 643.72 L-5.44 640.16 L-7.04 636.59 L-8.59 632.99 L-10.1 629.38 L-11.57 625.74 L-12.99 622.08 L-14.37 618.4 L-15.71 614.69 L-17.01 610.97 L-18.26 607.23 L-19.47 603.47 L-20.64 599.69 L-21.76 595.89 L-22.85 592.06 L-23.89 588.22 L-24.92 584.38 L-25.93 580.56 L-26.9 576.71 L-27.83 572.83 L-28.72 568.94 L-29.56 565.03 L-30.36 561.09 L-31.12 557.13 L-31.83 553.15 L-32.51 549.15 L-33.14 545.13 L-33.72 541.08 L-34.27 537.01 L-34.77 532.92 L-35.23 528.81 L-35.67 524.7 L-36.07 520.57 L-36.43 516.41 L-36.74 512.23 L-37.01 508.03 L-37.23 503.81 L-37.42 499.56 L-37.56 495.28 L-37.65 490.99 L-37.71 486.67 L-37.72 482.32 L-37.68 477.95 L-37.61 473.56 L-37.49 469.14 L-37.32 464.7 L-37.11 460.23 L-36.86 455.73 L-36.56 451.22 L-36.22 446.67 L-35.83 442.09 L-35.39 437.49 L-34.91 432.86 L-34.38 428.2 L-33.81 423.52 L-33.2 418.82 L-32.54 414.08 L-31.84 409.33 L-31.09 404.54 L-30.3 399.73 L-29.46 394.89 L-28.58 390.02 L-27.66 385.13 L-26.69 380.21 L-25.67 375.26 L-24.61 370.28 L-23.51 365.28 L-22.36 360.25 L-21.16 355.19 L-19.92 350.1 L-18.63 344.98 L-17.3 339.84 L-15.92 334.66 L-14.5 329.46 L-13.03 324.23 L-11.47 318.92 L-9.82 313.54 L-8.12 308.13 L-6.38 302.69 L-4.59 297.22 L-2.75 291.72 M133.16 751.62 L130.02 748.68 L126.9 745.73 L123.82 742.76 L121.5 740.5 L120.77 739.76 L117.79 736.71 L114.84 733.65 L111.92 730.57 L109.04 727.47 L106.19 724.36 L103.38 721.23 L100.64 718.04 L97.97 714.8 L95.34 711.54 L92.75 708.26 L90.2 704.97 L87.68 701.66 L85.2 698.33 L82.77 694.98 L80.31 691.67 L77.88 688.36 L75.49 685.03 L73.14 681.68 L70.84 678.31 L68.57 674.92 L66.35 671.51 L64.16 668.09 L62.01 664.65 L59.89 661.21 L57.81 657.75 L55.77 654.27 L53.77 650.77 L51.82 647.26 L49.91 643.72 L48.03 640.16 L46.21 636.59 L44.42 632.99 L42.68 629.38 L40.99 625.74 L39.34 622.08 L37.73 618.4 L36.16 614.69 L34.64 610.97 L33.16 607.23 L31.73 603.47 L30.34 599.69 L28.99 595.89 L27.68 592.06 L26.42 588.22 L25.17 584.38 L23.94 580.56 L22.74 576.71 L21.6 572.83 L20.49 568.94 L19.43 565.03 L18.42 561.09 L17.44 557.13 L16.51 553.15 L15.63 549.15 L14.79 545.13 L13.99 541.08 L13.24 537.01 L12.53 532.92 L11.86 528.81 L11.21 524.7 L10.6 520.57 L10.04 516.41 L9.52 512.23 L9.05 508.03 L8.62 503.81 L8.23 499.56 L7.89 495.28 L7.59 490.99 L7.34 486.67 L7.13 482.32 L6.97 477.95 L6.85 473.56 L6.77 469.14 L6.74 464.7 L6.75 460.23 L6.81 455.73 L6.92 451.22 L7.07 446.67 L7.27 442.09 L7.52 437.49 L7.81 432.86 L8.15 428.2 L8.53 423.52 L8.95 418.82 L9.43 414.08 L9.94 409.33 L10.51 404.54 L11.11 399.73 L11.77 394.89 L12.46 390.02 L13.21 385.13 L14 380.21 L14.83 375.26 L15.71 370.28 L16.64 365.28 L17.61 360.25 L18.63 355.19 L19.7 350.1 L20.81 344.98 L21.97 339.84 L23.17 334.66 L24.42 329.46 L25.72 324.23 L27.11 318.92 L28.59 313.54 L30.12 308.13 L31.69 302.69 L33.32 297.22 L34.98 291.72 L36.7 286.19 L38.46 280.63 L40.27 275.04 L42.13 269.41 L44.04 263.76 L45.99 258.08 L47.99 252.36 L50.04 246.61 L52.13 240.84 L54.28 235.03 M193.22 751.62 L190.08 748.68 L186.96 745.73 L183.84 742.76 L181.5 740.5 L180.76 739.76 L177.72 736.71 L174.71 733.65 L171.72 730.57 L168.74 727.47 L165.79 724.36 L162.87 721.23 L160 718.04 L157.21 714.8 L154.44 711.54 L151.7 708.26 L148.99 704.97 L146.32 701.66 L143.67 698.33 L141.06 694.98 L138.42 691.67 L135.81 688.36 L133.23 685.03 L130.69 681.68 L128.18 678.31 L125.71 674.92 L123.28 671.51 L120.89 668.09 L118.53 664.65 L116.2 661.21 L113.9 657.75 L111.64 654.27 L109.43 650.77 L107.25 647.26 L105.12 643.72 L103.02 640.16 L100.97 636.59 L98.96 632.99 L97 629.38 L95.08 625.74 L93.2 622.08 L91.37 618.4 L89.58 614.69 L87.83 610.97 L86.12 607.23 L84.46 603.47 L82.84 599.69 L81.27 595.89 L79.74 592.06 L78.25 588.22 L76.78 584.38 L75.32 580.56 L73.91 576.71 L72.54 572.83 L71.21 568.94 L69.93 565.03 L68.69 561.09 L67.5 557.13 L66.35 553.15 L65.25 549.15 L64.19 545.13 L63.17 541.08 L62.2 537.01 L61.28 532.92 L60.39 528.81 L59.53 524.7 L58.71 520.57 L57.94 516.41 L57.21 512.23 L56.52 508.03 L55.88 503.81 L55.29 499.56 L54.74 495.28 L54.24 490.99 L53.78 486.67 L53.36 482.32 L53 477.95 L52.67 473.56 L52.4 469.14 L52.16 464.7 L51.98 460.23 L51.84 455.73 L51.74 451.22 L51.7 446.67 L51.7 442.09 L51.75 437.49 L51.85 432.86 L51.99 428.2 L52.18 423.52 L52.41 418.82 L52.69 414.08 L53.02 409.33 L53.39 404.54 L53.81 399.73 L54.27 394.89 L54.78 390.02 L55.34 385.13 L55.94 380.21 L56.59 375.26 L57.29 370.28 L58.03 365.28 L58.82 360.25 L59.66 355.19 L60.55 350.1 L61.48 344.98 L62.46 339.84 L63.48 334.66 L64.55 329.46 L65.67 324.23 L66.88 318.92 L68.19 313.54 L69.54 308.13 L70.94 302.69 L72.39 297.22 L73.89 291.72 L75.43 286.19 L77.03 280.63 L78.67 275.04 L80.35 269.41 L82.09 263.76 L83.87 258.08 L85.71 252.36 L87.59 246.61 L89.52 240.84 L91.5 235.03 L93.53 229.18 L95.6 223.31 L97.73 217.4 L99.91 211.46 L102.13 205.49 L104.4 199.49 L106.73 193.45 L109.1 187.38 L111.52 181.28 L113.99 175.14 M252.47 751.62 L249.56 748.68 L246.64 745.73 L243.71 742.76 L241.5 740.5 L240.8 739.76 L237.91 736.71 L235.03 733.65 L232.15 730.57 L229.27 727.47 L226.4 724.36 L223.53 721.23 L220.71 718.04 L217.94 714.8 L215.18 711.54 L212.43 708.26 L209.7 704.97 L206.99 701.66 L204.29 698.33 L201.61 694.98 L198.9 691.67 L196.2 688.36 L193.52 685.03 L190.87 681.68 L188.24 678.31 L185.64 674.92 L183.07 671.51 L180.53 668.09 L178.02 664.65 L175.52 661.21 L173.05 657.75 L170.62 654.27 L168.22 650.77 L165.85 647.26 L163.53 643.72 L161.24 640.16 L158.99 636.59 L156.77 632.99 L154.6 629.38 L152.47 625.74 L150.38 622.08 L148.33 618.4 L146.32 614.69 L144.35 610.97 L142.42 607.23 L140.54 603.47 L138.7 599.69 L136.9 595.89 L135.14 592.06 L133.42 588.22 L131.72 584.38 L130.03 580.56 L128.39 576.71 L126.79 572.83 L125.24 568.94 L123.73 565.03 L122.26 561.09 L120.84 557.13 L119.46 553.15 L118.13 549.15 L116.84 545.13 L115.6 541.08 L114.4 537.01 L113.25 532.92 L112.14 528.81 L111.05 524.7 L110.01 520.57 L109.01 516.41 L108.06 512.23 L107.15 508.03 L106.29 503.81 L105.48 499.56 L104.71 495.28 L103.98 490.99 L103.31 486.67 L102.67 482.32 L102.09 477.95 L101.55 473.56 L101.06 469.14 L100.61 464.7 L100.21 460.23 L99.86 455.73 L99.55 451.22 L99.3 446.67 L99.09 442.09 L98.93 437.49 L98.82 432.86 L98.76 428.2 L98.74 423.52 L98.77 418.82 L98.84 414.08 L98.96 409.33 L99.13 404.54 L99.35 399.73 L99.61 394.89 L99.92 390.02 L100.28 385.13 L100.69 380.21 L101.14 375.26 L101.64 370.28 L102.19 365.28 L102.78 360.25 L103.42 355.19 L104.11 350.1 L104.85 344.98 L105.64 339.84 L106.47 334.66 L107.36 329.46 L108.29 324.23 L109.31 318.92 L110.43 313.54 L111.6 308.13 L112.81 302.69 L114.08 297.22 L115.39 291.72 L116.75 286.19 L118.16 280.63 L119.62 275.04 L121.12 269.41 L122.68 263.76 L124.28 258.08 L125.94 252.36 L127.64 246.61 L129.4 240.84 L131.2 235.03 L133.05 229.18 L134.95 223.31 L136.91 217.4 L138.91 211.46 L140.96 205.49 L143.06 199.49 L145.22 193.45 L147.42 187.38 L149.67 181.28 L151.98 175.14 L154.33 168.97 L156.73 162.77 L159.19 156.53 L161.7 150.25 L164.25 143.95 L166.86 137.61 L169.52 131.23 L172.24 124.82 L175 118.37 L177.81 111.89 L180.68 105.37 M310.74 751.62 L308.31 748.68 L305.85 745.73 L303.38 742.76 L301.5 740.5 L300.9 739.76 L298.44 736.71 L295.96 733.65 L293.46 730.57 L290.95 727.47 L288.43 724.36 L285.89 721.23 L283.38 718.04 L280.89 714.8 L278.4 711.54 L275.9 708.26 L273.4 704.97 L270.89 701.66 L268.37 698.33 L265.86 694.98 L263.28 691.67 L260.7 688.36 L258.13 685.03 L255.56 681.68 L252.99 678.31 L250.44 674.92 L247.89 671.51 L245.36 668.09 L242.84 664.65 L240.31 661.21 L237.81 657.75 L235.32 654.27 L232.85 650.77 L230.4 647.26 L227.98 643.72 L225.58 640.16 L223.2 636.59 L220.86 632.99 L218.54 629.38 L216.26 625.74 L214 622.08 L211.78 618.4 L209.6 614.69 L207.45 610.97 L205.33 607.23 L203.25 603.47 L201.2 599.69 L199.19 595.89 L197.22 592.06 L195.29 588.22 L193.37 584.38 L191.46 580.56 L189.59 576.71 L187.76 572.83 L185.97 568.94 L184.23 565.03 L182.53 561.09 L180.87 557.13 L179.25 553.15 L177.68 549.15 L176.15 545.13 L174.66 541.08 L173.22 537.01 L171.83 532.92 L170.47 528.81 L169.14 524.7 L167.85 520.57 L166.61 516.41 L165.41 512.23 L164.26 508.03 L163.15 503.81 L162.09 499.56 L161.08 495.28 L160.11 490.99 L159.19 486.67 L158.32 482.32 L157.49 477.95 L156.71 473.56 L155.98 469.14 L155.29 464.7 L154.65 460.23 L154.06 455.73 L153.52 451.22 L153.03 446.67 L152.58 442.09 L152.19 437.49 L151.84 432.86 L151.55 428.2 L151.3 423.52 L151.09 418.82 L150.94 414.08 L150.83 409.33 L150.77 404.54 L150.76 399.73 L150.8 394.89 L150.88 390.02 L151.01 385.13 L151.2 380.21 L151.43 375.26 L151.7 370.28 L152.03 365.28 L152.41 360.25 L152.83 355.19 L153.3 350.1 L153.82 344.98 L154.39 339.84 L155.01 334.66 L155.68 329.46 L156.4 324.23 L157.21 318.92 L158.12 313.54 L159.07 308.13 L160.08 302.69 L161.13 297.22 L162.24 291.72 L163.39 286.19 L164.6 280.63 L165.85 275.04 L167.15 269.41 L168.51 263.76 L169.91 258.08 L171.36 252.36 L172.86 246.61 L174.42 240.84 L176.02 235.03 L177.68 229.18 L179.38 223.31 L181.14 217.4 L182.95 211.46 L184.8 205.49 L186.71 199.49 L188.67 193.45 L190.68 187.38 L192.74 181.28 L194.86 175.14 L197.02 168.97 L199.24 162.77 L201.51 156.53 L203.83 150.25 L206.2 143.95 L208.62 137.61 L211.1 131.23 L213.63 124.82 L216.21 118.37 L218.84 111.89 L221.52 105.37 L224.26 98.81 L227.05 92.22 L229.9 85.6 L232.8 78.94 L235.75 72.24 L238.75 65.5 L241.81 58.73 L244.92 51.92 L248.05 45.11 L251.22 38.27 M368.25 751.62 L366.48 748.68 L364.69 745.73 L362.88 742.76 L361.5 740.5 L361.06 739.76 L359.26 736.71 L357.44 733.65 L355.59 730.57 L353.73 727.47 L351.84 724.36 L349.94 721.23 L348.04 718.04 L346.17 714.8 L344.28 711.54 L342.37 708.26 L340.44 704.97 L338.48 701.66 L336.51 698.33 L334.52 694.98 L332.45 691.67 L330.36 688.36 L328.24 685.03 L326.12 681.68 L323.97 678.31 L321.81 674.92 L319.64 671.51 L317.46 668.09 L315.26 664.65 L313.04 661.21 L310.8 657.75 L308.57 654.27 L306.33 650.77 L304.08 647.26 L301.84 643.72 L299.59 640.16 L297.35 636.59 L295.11 632.99 L292.87 629.38 L290.65 625.74 L288.44 622.08 L286.24 618.4 L284.05 614.69 L281.88 610.97 L279.72 607.23 L277.58 603.47 L275.46 599.69 L273.36 595.89 L271.29 592.06 L269.24 588.22 L267.18 584.38 L265.12 580.56 L263.09 576.71 L261.09 572.83 L259.12 568.94 L257.18 565.03 L255.28 561.09 L253.41 557.13 L251.58 553.15 L249.78 549.15 L248.02 545.13 L246.29 541.08 L244.61 537.01 L242.97 532.92 L241.36 528.81 L239.77 524.7 L238.22 520.57 L236.71 516.41 L235.25 512.23 L233.83 508.03 L232.45 503.81 L231.12 499.56 L229.83 495.28 L228.58 490.99 L227.39 486.67 L226.23 482.32 L225.13 477.95 L224.06 473.56 L223.05 469.14 L222.08 464.7 L221.16 460.23 L220.29 455.73 L219.46 451.22 L218.69 446.67 L217.97 442.09 L217.29 437.49 L216.66 432.86 L216.09 428.2 L215.56 423.52 L215.07 418.82 L214.64 414.08 L214.26 409.33 L213.92 404.54 L213.63 399.73 L213.4 394.89 L213.21 390.02 L213.07 385.13 L212.98 380.21 L212.93 375.26 L212.94 370.28 L213 365.28 L213.11 360.25 L213.26 355.19 L213.47 350.1 L213.73 344.98 L214.03 339.84 L214.39 334.66 L214.8 329.46 L215.25 324.23 L215.8 318.92 L216.45 313.54 L217.15 308.13 L217.9 302.69 L218.7 297.22 L219.55 291.72 L220.45 286.19 L221.4 280.63 L222.41 275.04 L223.46 269.41 L224.56 263.76 L225.72 258.08 L226.93 252.36 L228.18 246.61 L229.49 240.84 L230.85 235.03 L232.27 229.18 L233.73 223.31 L235.25 217.4 L236.81 211.46 L238.43 205.49 L240.11 199.49 L241.83 193.45 L243.61 187.38 L245.43 181.28 L247.32 175.14 L249.25 168.97 L251.23 162.77 L253.27 156.53 L255.36 150.25 L257.51 143.95 L259.7 137.61 L261.95 131.23 L264.26 124.82 L266.62 118.37 L269.03 111.89 L271.49 105.37 L274.01 98.81 L276.58 92.22 L279.2 85.6 L281.88 78.94 L284.62 72.24 L287.41 65.5 L290.25 58.73 L293.15 51.92 L296.06 45.11 L299.02 38.27 L302.03 31.4 L305.1 24.49 L308.22 17.54 L311.4 10.55 L314.63 3.52 M425.55 751.62 L424.48 748.68 L423.41 745.73 L422.32 742.76 L421.5 740.5 L421.24 739.76 L420.19 736.71 L419.12 733.65 L418.05 730.57 L416.96 727.47 L415.87 724.36 L414.76 721.23 L413.67 718.04 L412.61 714.8 L411.54 711.54 L410.46 708.26 L409.36 704.97 L408.24 701.66 L407.11 698.33 L405.96 694.98 L404.74 691.67 L403.49 688.36 L402.22 685.03 L400.93 681.68 L399.62 678.31 L398.3 674.92 L396.96 671.51 L395.59 668.09 L394.21 664.65 L392.78 661.21 L391.34 657.75 L389.87 654.27 L388.38 650.77 L386.88 647.26 L385.35 643.72 L383.81 640.16 L382.24 636.59 L380.66 632.99 L379.06 629.38 L377.44 625.74 L375.81 622.08 L374.16 618.4 L372.5 614.69 L370.82 610.97 L369.12 607.23 L367.41 603.47 L365.7 599.69 L363.97 595.89 L362.23 592.06 L360.48 588.22 L358.7 584.38 L356.89 580.56 L355.07 576.71 L353.26 572.83 L351.44 568.94 L349.63 565.03 L347.82 561.09 L346.01 557.13 L344.22 553.15 L342.43 549.15 L340.66 545.13 L338.9 541.08 L337.16 537.01 L335.44 532.92 L333.73 528.81 L332.02 524.7 L330.33 520.57 L328.67 516.41 L327.03 512.23 L325.42 508.03 L323.83 503.81 L322.28 499.56 L320.76 495.28 L319.27 490.99 L317.82 486.67 L316.4 482.32 L315.01 477.95 L313.67 473.56 L312.36 469.14 L311.09 464.7 L309.86 460.23 L308.67 455.73 L307.53 451.22 L306.43 446.67 L305.38 442.09 L304.37 437.49 L303.41 432.86 L302.49 428.2 L301.62 423.52 L300.8 418.82 L300.02 414.08 L299.29 409.33 L298.61 404.54 L297.97 399.73 L297.38 394.89 L296.84 390.02 L296.35 385.13 L295.91 380.21 L295.52 375.26 L295.17 370.28 L294.88 365.28 L294.64 360.25 L294.44 355.19 L294.3 350.1 L294.21 344.98 L294.16 339.84 L294.17 334.66 L294.23 329.46 L294.34 324.23 L294.55 318.92 L294.86 313.54 L295.21 308.13 L295.62 302.69 L296.08 297.22 L296.59 291.72 L297.15 286.19 L297.77 280.63 L298.44 275.04 L299.15 269.41 L299.93 263.76 L300.75 258.08 L301.63 252.36 L302.55 246.61 L303.54 240.84 L304.57 235.03 L305.66 229.18 L306.8 223.31 L307.99 217.4 L309.24 211.46 L310.54 205.49 L311.89 199.49 L313.3 193.45 L314.76 187.38 L316.27 181.28 L317.84 175.14 L319.46 168.97 L321.14 162.77 L322.87 156.53 L324.65 150.25 L326.49 143.95 L328.38 137.61 L330.33 131.23 L332.33 124.82 L334.39 118.37 L336.5 111.89 L338.66 105.37 L340.89 98.81 L343.16 92.22 L345.49 85.6 L347.88 78.94 L350.32 72.24 L352.82 65.5 L355.38 58.73 L357.98 51.92 L360.61 45.11 L363.28 38.27 L366.01 31.4 L368.8 24.49 L371.64 17.54 L374.54 10.55 L377.49 3.52 M483.19 751.62 L482.73 748.68 L482.28 745.73 L481.83 742.76 L481.5 740.5 L481.4 739.76 L481.01 736.71 L480.62 733.65 L480.24 730.57 L479.86 727.47 L479.48 724.36 L479.11 721.23 L478.77 718.04 L478.48 714.8 L478.19 711.54 L477.9 708.26 L477.61 704.97 L477.33 701.66 L477.04 698.33 L476.75 694.98 L476.4 691.67 L476.04 688.36 L475.68 685.03 L475.32 681.68 L474.96 678.31 L474.59 674.92 L474.23 671.51 L473.85 668.09 L473.47 664.65 L473.07 661.21 L472.66 657.75 L472.24 654.27 L471.82 650.77 L471.39 647.26 L470.95 643.72 L470.5 640.16 L470.04 636.59 L469.58 632.99 L469.1 629.38 L468.62 625.74 L468.13 622.08 L467.62 618.4 L467.1 614.69 L466.57 610.97 L466.03 607.23 L465.47 603.47 L464.9 599.69 L464.31 595.89 L463.71 592.06 L463.09 588.22 L462.42 584.38 L461.7 580.56 L460.97 576.71 L460.22 572.83 L459.45 568.94 L458.66 565.03 L457.86 561.09 L457.03 557.13 L456.19 553.15 L455.32 549.15 L454.44 545.13 L453.54 541.08 L452.62 537.01 L451.69 532.92 L450.73 528.81 L449.73 524.7 L448.71 520.57 L447.68 516.41 L446.63 512.23 L445.57 508.03 L444.49 503.81 L443.41 499.56 L442.31 495.28 L441.2 490.99 L440.09 486.67 L438.97 482.32 L437.85 477.95 L436.72 473.56 L435.59 469.14 L434.47 464.7 L433.34 460.23 L432.22 455.73 L431.11 451.22 L430.01 446.67 L428.93 442.09 L427.85 437.49 L426.8 432.86 L425.75 428.2 L424.73 423.52 L423.73 418.82 L422.75 414.08 L421.79 409.33 L420.85 404.54 L419.95 399.73 L419.07 394.89 L418.23 390.02 L417.41 385.13 L416.63 380.21 L415.88 375.26 L415.17 370.28 L414.5 365.28 L413.87 360.25 L413.28 355.19 L412.73 350.1 L412.22 344.98 L411.75 339.84 L411.33 334.66 L410.95 329.46 L410.62 324.23 L410.38 318.92 L410.24 313.54 L410.14 308.13 L410.09 302.69 L410.09 297.22 L410.13 291.72 L410.23 286.19 L410.38 280.63 L410.58 275.04 L410.83 269.41 L411.13 263.76 L411.49 258.08 L411.9 252.36 L412.36 246.61 L412.87 240.84 L413.43 235.03 L414.05 229.18 L414.73 223.31 L415.45 217.4 L416.24 211.46 L417.07 205.49 L417.96 199.49 L418.91 193.45 L419.91 187.38 L420.96 181.28 L422.07 175.14 L423.24 168.97 L424.46 162.77 L425.73 156.53 L427.06 150.25 L428.45 143.95 L429.9 137.61 L431.4 131.23 L432.95 124.82 L434.57 118.37 L436.24 111.89 L437.96 105.37 L439.75 98.81 L441.59 92.22 L443.49 85.6 L445.44 78.94 L447.45 72.24 L449.52 65.5 L451.65 58.73 L453.84 51.92 L456.04 45.11 L458.29 38.27 L460.6 31.4 L462.97 24.49 L465.39 17.54 L467.88 10.55 L470.42 3.52 M541.44 751.62 L541.44 748.68 L541.45 745.73 L541.47 742.76 L541.5 740.5 L541.52 739.76 L541.62 736.71 L541.73 733.65 L541.86 730.57 L541.99 727.47 L542.15 724.36 L542.31 721.23 L542.53 718.04 L542.79 714.8 L543.08 711.54 L543.37 708.26 L543.68 704.97 L544 701.66 L544.34 698.33 L544.69 694.98 L544.99 691.67 L545.29 688.36 L545.61 685.03 L545.93 681.68 L546.27 678.31 L546.63 674.92 L546.99 671.51 L547.37 668.09 L547.75 664.65 L548.13 661.21 L548.51 657.75 L548.91 654.27 L549.32 650.77 L549.75 647.26 L550.18 643.72 L550.62 640.16 L551.07 636.59 L551.53 632.99 L552 629.38 L552.49 625.74 L552.99 622.08 L553.49 618.4 L554.01 614.69 L554.53 610.97 L555.06 607.23 L555.6 603.47 L556.14 599.69 L556.7 595.89 L557.26 592.06 L557.82 588.22 L558.36 584.38 L558.88 580.56 L559.41 576.71 L559.94 572.83 L560.47 568.94 L561.01 565.03 L561.55 561.09 L562.1 557.13 L562.65 553.15 L563.21 549.15 L563.76 545.13 L564.32 541.08 L564.88 537.01 L565.44 532.92 L566 528.81 L566.53 524.7 L567.06 520.57 L567.59 516.41 L568.11 512.23 L568.64 508.03 L569.16 503.81 L569.68 499.56 L570.19 495.28 L570.7 490.99 L571.21 486.67 L571.71 482.32 L572.2 477.95 L572.68 473.56 L573.16 469.14 L573.63 464.7 L574.09 460.23 L574.54 455.73 L574.98 451.22 L575.42 446.67 L575.84 442.09 L576.25 437.49 L576.65 432.86 L577.04 428.2 L577.41 423.52 L577.77 418.82 L578.11 414.08 L578.44 409.33 L578.75 404.54 L579.05 399.73 L579.33 394.89 L579.6 390.02 L579.85 385.13 L580.08 380.21 L580.3 375.26 L580.5 370.28 L580.68 365.28 L580.85 360.25 L581.01 355.19 L581.15 350.1 L581.28 344.98 L581.39 339.84 L581.5 334.66 L581.59 329.46 L581.67 324.23 L581.79 318.92 L581.95 313.54 L582.11 308.13 L582.26 302.69 L582.41 297.22 L582.56 291.72 L582.71 286.19 L582.86 280.63 L583.02 275.04 L583.19 269.41 L583.37 263.76 L583.56 258.08 L583.76 252.36 L583.98 246.61 L584.22 240.84 L584.48 235.03 L584.76 229.18 L585.07 223.31 L585.4 217.4 L585.76 211.46 L586.16 205.49 L586.58 199.49 L587.04 193.45 L587.54 187.38 L588.07 181.28 L588.64 175.14 L589.26 168.97 L589.91 162.77 L590.61 156.53 L591.36 150.25 L592.15 143.95 L592.99 137.61 L593.87 131.23 L594.81 124.82 L595.79 118.37 L596.83 111.89 L597.92 105.37 L599.06 98.81 L600.25 92.22 L601.5 85.6 L602.81 78.94 L604.16 72.24 L605.58 65.5 L607.05 58.73 L608.58 51.92 L610.13 45.11 L611.73 38.27 L613.38 31.4 L615.09 24.49 L616.86 17.54 L618.69 10.55 L620.58 3.52 M600.31 751.62 L600.6 748.68 L600.91 745.73 L601.24 742.76 L601.5 740.5 L601.6 739.76 L602.01 736.71 L602.43 733.65 L602.88 730.57 L603.35 727.47 L603.83 724.36 L604.34 721.23 L604.89 718.04 L605.51 714.8 L606.15 711.54 L606.8 708.26 L607.48 704.97 L608.17 701.66 L608.89 698.33 L609.62 694.98 L610.31 691.67 L611.01 688.36 L611.73 685.03 L612.47 681.68 L613.23 678.31 L614.01 674.92 L614.81 671.51 L615.63 668.09 L616.46 664.65 L617.29 661.21 L618.15 657.75 L619.02 654.27 L619.91 650.77 L620.82 647.26 L621.75 643.72 L622.71 640.16 L623.67 636.59 L624.66 632.99 L625.67 629.38 L626.71 625.74 L627.76 622.08 L628.83 618.4 L629.92 614.69 L631.03 610.97 L632.16 607.23 L633.31 603.47 L634.48 599.69 L635.67 595.89 L636.88 592.06 L638.11 588.22 L639.33 584.38 L640.54 580.56 L641.78 576.71 L643.03 572.83 L644.3 568.94 L645.6 565.03 L646.91 561.09 L648.24 557.13 L649.59 553.15 L650.96 549.15 L652.35 545.13 L653.76 541.08 L655.18 537.01 L656.63 532.92 L658.09 528.81 L659.54 524.7 L661.02 520.57 L662.51 516.41 L664.02 512.23 L665.55 508.03 L667.1 503.81 L668.66 499.56 L670.25 495.28 L671.86 490.99 L673.49 486.67 L675.13 482.32 L676.8 477.95 L678.48 473.56 L680.19 469.14 L681.91 464.7 L683.65 460.23 L685.41 455.73 L687.19 451.22 L688.99 446.67 L690.81 442.09 L692.65 437.49 L694.5 432.86 L696.38 428.2 L698.27 423.52 L700.18 418.82 L702.11 414.08 L704.05 409.33 L706.02 404.54 L708 399.73 L709.99 394.89 L712 390.02 L714.03 385.13 L716.08 380.21 L718.14 375.26 L720.21 370.28 L722.31 365.28 L724.41 360.25 L726.53 355.19 L728.67 350.1 L730.82 344.98 L732.99 339.84 L735.16 334.66 L737.36 329.46 L739.56 324.23 L741.83 318.92 L744.15 313.54 L746.48 308.13 L748.83 302.69 L751.19 297.22 L753.56 291.72 L755.94 286.19 L758.33 280.63 L760.73 275.04 L763.14 269.41 L765.55 263.76 L767.98 258.08 L770.41 252.36 L772.85 246.61 L775.3 240.84 L777.75 235.03 L780.21 229.18 L782.68 223.31 L785.15 217.4 L787.62 211.46 L790.1 205.49 L792.58 199.49 L795.06 193.45 L797.55 187.38 L800.03 181.28 L802.51 175.14 L804.99 168.97 L807.47 162.77 L809.95 156.53 L812.42 150.25 L814.89 143.95 L817.36 137.61 L819.82 131.23 L822.28 124.82 L824.73 118.37 L827.18 111.89 L829.61 105.37 L832.04 98.81 L834.46 92.22 L836.88 85.6 L839.28 78.94 L841.68 72.24 L844.06 65.5 L846.44 58.73 L848.8 51.92 L851.12 45.11 L853.42 38.27 L855.71 31.4 L857.99 24.49 L860.26 17.54 L862.53 10.55 L864.78 3.52 M659.69 751.62 L660.14 748.68 L660.62 745.73 L661.11 742.76 L661.5 740.5 L661.64 739.76 L662.22 736.71 L662.82 733.65 L663.44 730.57 L664.09 727.47 L664.75 724.36 L665.44 721.23 L666.18 718.04 L666.99 714.8 L667.81 711.54 L668.66 708.26 L669.53 704.97 L670.42 701.66 L671.33 698.33 L672.27 694.98 L673.16 691.67 L674.07 688.36 L675 685.03 L675.95 681.68 L676.92 678.31 L677.91 674.92 L678.93 671.51 L679.97 668.09 L681.03 664.65 L682.1 661.21 L683.18 657.75 L684.3 654.27 L685.43 650.77 L686.59 647.26 L687.77 643.72 L688.98 640.16 L690.2 636.59 L691.45 632.99 L692.73 629.38 L694.03 625.74 L695.35 622.08 L696.7 618.4 L698.07 614.69 L699.46 610.97 L700.88 607.23 L702.32 603.47 L703.78 599.69 L705.26 595.89 L706.77 592.06 L708.3 588.22 L709.82 584.38 L711.34 580.56 L712.89 576.71 L714.45 572.83 L716.05 568.94 L717.66 565.03 L719.31 561.09 L720.97 557.13 L722.66 553.15 L724.38 549.15 L726.12 545.13 L727.89 541.08 L729.68 537.01 L731.5 532.92 L733.34 528.81 L735.18 524.7 L737.04 520.57 L738.93 516.41 L740.85 512.23 L742.79 508.03 L744.75 503.81 L746.75 499.56 L748.76 495.28 L750.81 490.99 L752.88 486.67 L754.97 482.32 L757.1 477.95 L759.24 473.56 L761.42 469.14 L763.62 464.7 L765.85 460.23 L768.1 455.73 L770.39 451.22 L772.7 446.67 L775.04 442.09 L777.41 437.49 L779.81 432.86 L782.24 428.2 L784.69 423.52 L787.17 418.82 L789.68 414.08 L792.21 409.33 L794.77 404.54 L797.36 399.73 L799.98 394.89 L802.63 390.02 L805.3 385.13 L808.01 380.21 L810.74 375.26 L813.5 370.28 L816.28 365.28 L819.1 360.25 L821.94 355.19 L824.82 350.1 L827.72 344.98 L830.65 339.84 L833.62 334.66 L836.61 329.46 L839.63 324.23 L842.72 318.92 L845.89 313.54 L849.09 308.13 L852.31 302.69 L855.57 297.22 L858.86 291.72 L862.18 286.19 L865.52 280.63 L868.9 275.04 L872.31 269.41 L875.74 263.76 L879.21 258.08 L882.71 252.36 L886.24 246.61 L889.8 240.84 L893.39 235.03 L897.01 229.18 L900.67 223.31 L904.36 217.4 L908.07 211.46 L911.82 205.49 L915.6 199.49 L919.42 193.45 L923.26 187.38 L927.13 181.28 L931.04 175.14 L934.98 168.97 L938.95 162.77 L942.95 156.53 L946.98 150.25 L951.04 143.95 L955.14 137.61 L959.26 131.23 L963.42 124.82 L967.61 118.37 L971.84 111.89 L976.09 105.37 L980.38 98.81 L984.71 92.22 L989.06 85.6 L993.45 78.94 L997.87 72.24 L1002.32 65.5 L1006.81 58.73 L1011.33 51.92 L1015.85 45.11 L1020.38 38.27 L1024.95 31.4 L1029.56 24.49 L1034.19 17.54 L1038.86 10.55 L1043.56 3.52 M719.43 751.62 L719.95 748.68 L720.49 745.73 L721.06 742.76 L721.5 740.5 L721.66 739.76 L722.31 736.71 L722.98 733.65 L723.68 730.57 L724.4 727.47 L725.13 724.36 L725.9 721.23 L726.72 718.04 L727.6 714.8 L728.5 711.54 L729.43 708.26 L730.38 704.97 L731.36 701.66 L732.35 698.33 L733.37 694.98 L734.35 691.67 L735.34 688.36 L736.36 685.03 L737.4 681.68 L738.47 678.31 L739.55 674.92 L740.66 671.51 L741.8 668.09 L742.95 664.65 L744.11 661.21 L745.29 657.75 L746.5 654.27 L747.73 650.77 L748.98 647.26 L750.26 643.72 L751.56 640.16 L752.89 636.59 L754.24 632.99 L755.62 629.38 L757.02 625.74 L758.45 622.08 L759.9 618.4 L761.38 614.69 L762.88 610.97 L764.4 607.23 L765.96 603.47 L767.53 599.69 L769.13 595.89 L770.76 592.06 L772.41 588.22 L774.06 584.38 L775.7 580.56 L777.37 576.71 L779.06 572.83 L780.78 568.94 L782.53 565.03 L784.3 561.09 L786.1 557.13 L787.93 553.15 L789.78 549.15 L791.66 545.13 L793.56 541.08 L795.49 537.01 L797.45 532.92 L799.43 528.81 L801.41 524.7 L803.42 520.57 L805.46 516.41 L807.52 512.23 L809.61 508.03 L811.73 503.81 L813.87 499.56 L816.04 495.28 L818.24 490.99 L820.47 486.67 L822.73 482.32 L825.01 477.95 L827.32 473.56 L829.66 469.14 L832.03 464.7 L834.43 460.23 L836.85 455.73 L839.31 451.22 L841.79 446.67 L844.32 442.09 L846.87 437.49 L849.45 432.86 L852.05 428.2 L854.69 423.52 L857.36 418.82 L860.06 414.08 L862.79 409.33 L865.55 404.54 L868.34 399.73 L871.16 394.89 L874.01 390.02 L876.89 385.13 L879.8 380.21 L882.74 375.26 L885.71 370.28 L888.71 365.28 L891.74 360.25 L894.81 355.19 L897.9 350.1 L901.03 344.98 L904.19 339.84 L907.38 334.66 L910.6 329.46 L913.86 324.23 L917.19 318.92 L920.6 313.54 L924.04 308.13 L927.52 302.69 L931.03 297.22 L934.57 291.72 L938.14 286.19 L941.75 280.63 L945.4 275.04 L949.07 269.41 L952.78 263.76 L956.53 258.08 L960.31 252.36 L964.12 246.61 L967.97 240.84 L971.86 235.03 L975.77 229.18 L979.73 223.31 L983.71 217.4 L987.74 211.46 L991.79 205.49 L995.89 199.49 L1000.02 193.45 L1004.18 187.38 L1008.38 181.28 L1012.61 175.14 L1016.88 168.97 L1021.19 162.77 L1025.54 156.53 L1029.92 150.25 L1034.33 143.95 L1038.79 137.61 L1043.28 131.23 L1047.81 124.82 L1052.38 118.37 L1056.99 111.89 L1061.63 105.37 L1066.31 98.81 L1071.03 92.22 L1075.79 85.6 L1080.59 78.94 L1085.43 72.24 L1090.31 65.5 L1095.22 58.73 L1100.18 51.92 L1105.13 45.11 L1110.12 38.27 L1115.14 31.4 L1120.21 24.49 L1125.31 17.54 L1130.46 10.55 L1135.65 3.52" stroke="#000080" stroke-width="1" fill="none"/>
<path clip-path="url(#pc)" d="M-1147.5 749.5 L-448.5 50.5 M-1087.5 749.5 L-388.5 50.5 M-1027.5 749.5 L-328.5 50.5 M-967.5 749.5 L-268.5 50.5 M-907.5 749.5 L-208.5 50.5 M-847.5 749.5 L-148.5 50.5 M-787.5 749.5 L-88.5 50.5 M-727.5 749.5 L-28.5 50.5 M-667.5 749.5 L31.5 50.5 M-607.5 749.5 L91.5 50.5 M-547.5 749.5 L151.5 50.5 M-487.5 749.5 L211.5 50.5 M-427.5 749.5 L271.5 50.5 M-367.5 749.5 L331.5 50.5 M-307.5 749.5 L391.5 50.5 M-247.5 749.5 L451.5 50.5 M-187.5 749.5 L511.5 50.5 M-127.5 749.5 L571.5 50.5 M-67.5 749.5 L631.5 50.5 M-7.5 749.5 L691.5 50.5 M52.5 749.5 L751.5 50.5 M112.5 749.5 L811.5 50.5 M172.5 749.5 L871.5 50.5 M232.5 749.5 L931.5 50.5 M292.5 749.5 L991.5 50.5 M352.5 749.5 L1051.5 50.5 M412.5 749.5 L1111.5 50.5 M472.5 749.5 L1171.5 50.5 M532.5 749.5 L1231.5 50.5 M592.5 749.5 L1291.5 50.5 M652.5 749.5 L1351.5 50.5 M712.5 749.5 L1411.5 50.5" stroke="#fff" stroke-width="1" fill="none"/>
<path d="M56 50.5H666 M56 321.5H666 M56 449.5H666 M56 529.5H666 M56 586.5H666 M56 630.5H666 M56 665.5H666 M56 694.5H666 M56 719.5H666 M56 740.5H662" stroke="#fff" stroke-width="1" fill="none"/>
<path d="M61.5 50V754 M661.5 50V754 M61 749.5H662" stroke="#fff" stroke-width="1" fill="none"/>
<path d="M61.5 749V754 M61.5 788V793 M61.5 826V831 M121.5 749V754 M121.5 788V793 M121.5 826V831 M181.5 749V754 M181.5 788V793 M181.5 826V831 M241.5 749V754 M241.5 788V793 M241.5 826V831 M301.5 749V754 M301.5 788V793 M301.5 826V831 M361.5 749V754 M361.5 788V793 M361.5 826V831 M421.5 749V754 M421.5 788V793 M421.5 826V831 M481.5 749V754 M481.5 788V793 M481.5 826V831 M541.5 749V754 M541.5 788V793 M541.5 826V831 M601.5 749V754 M601.5 788V793 M601.5 826V831 M661.5 749V754 M661.5 788V793 M661.5 826V831 M61.5 863V868 M136.5 863V868 M211.5 863V868 M286.5 863V868 M361.5 863V868 M436.5 863V868 M511.5 863V868 M586.5 863V868 M661.5 863V868" stroke="#fff" stroke-width="1" fill="none"/>
<path d="M61 696.5H626" stroke="#ff00ff" stroke-width="1" fill="none"/>
<polyline clip-path="url(#pc)" points="497.4,51.2 473,156.5 465.3,202.3 463.3,321.5 470,391.7 479.1,449 490.3,493.5 493,529.9 497,600.7 498.8,666.2 500.8,696.7" stroke="#ff00ff" stroke-width="1" fill="none" stroke-linejoin="round" />
<polyline clip-path="url(#pc)" points="482.5,727 500.8,696.7 543,727" stroke="#ff00ff" stroke-width="1" fill="none" stroke-linejoin="round" />
<polyline clip-path="url(#pc)" points="518.5,51.2 498.9,132.1 491.3,177.5 486.7,254.2 487.9,321.5 495.3,391.5 502.1,449 507.8,529.9 510.5,600.5 511,650.5 510.7,676.9 576.8,726.6" stroke="#ffc0ff" stroke-width="1" fill="none" stroke-linejoin="round" />
<polyline clip-path="url(#pc)" points="500.8,696.7 510.7,678" stroke="#ffc0ff" stroke-width="1" fill="none" stroke-linejoin="round" />
<path clip-path="url(#pc)" d="M534 726.5h5M536.5 724v5 M531 722.5h5M533.5 720v5 M531 714.5h5M533.5 712v5 M528 705.5h5M530.5 703v5 M523 695.5h5M525.5 693v5 M513 683.5h5M515.5 681v5 M500 670.5h5M502.5 668v5 M494 666.5h5M496.5 664v5 M476 648.5h5M478.5 646v5 M467 630.5h5M469.5 628v5 M446 611.5h5M448.5 609v5 M441 586.5h5M443.5 584v5 M450 560.5h5M452.5 558v5 M441 529.5h5M443.5 527v5 M424 493.5h5M426.5 491v5 M412 448.5h5M414.5 446v5 M408 395.5h5M410.5 393v5 M417 320.5h5M419.5 318v5 M550 218.5h5M552.5 216v5" stroke="#fff" stroke-width="1" fill="none"/>
<path clip-path="url(#pc)" d="M480 726.5h5M482.5 724v5 M484 722.5h5M486.5 720v5 M490 714.5h5M492.5 712v5 M490 706.5h5M492.5 704v5 M482 696.5h5M484.5 694v5 M468 683.5h5M470.5 681v5 M450 670.5h5M452.5 668v5 M432 666.5h5M434.5 664v5 M426 665.5h5M428.5 663v5 M413 648.5h5M415.5 646v5 M411 630.5h5M413.5 628v5 M392 611.5h5M394.5 609v5 M387 585.5h5M389.5 583v5 M373 560.5h5M375.5 558v5 M366 529.5h5M368.5 527v5 M374 493.5h5M376.5 491v5 M409 395.5h5M411.5 393v5 M413 319.5h5M415.5 317v5 M419 218.5h5M421.5 216v5" stroke="#fff" stroke-width="1" fill="none"/>
<polyline clip-path="url(#pc)" points="536.7,726.6 533.6,722.1 533.6,714 530.5,705.5 525.5,695.7 515.7,683.2 502.7,670.6 496.9,666.2 478.9,648.5 469.5,630.9 448.5,611.1 443.1,586.5 452.5,560.5 443.1,529.9 426.2,493.5 414.4,449 410.5,395.1 419.5,321 552.3,218.5 660.7,98.5 700.5,54.5" stroke="#ff0000" stroke-width="1" fill="none" stroke-linejoin="round" />
<polyline clip-path="url(#pc)" points="482.5,727 487,722.1 492,714.2 492.9,706 484.8,696.1 470.9,683.8 453,670.6 434.5,666.9 428.5,665.9 415.5,648.5 413.5,630.9 394.5,611.1 389.1,585.5 375.7,560.9 368.9,529.9 376.9,493.8 411.1,395.1 415.9,319.8 421.1,218.5 566.1,52.1" stroke="#00ffff" stroke-width="1" fill="none" stroke-linejoin="round" />
<path clip-path="url(#pc)" d="M90 726.5h5M92.5 724v5 M83 722.5h5M85.5 720v5 M77 713.5h5M79.5 711v5 M72 706.5h5M74.5 704v5 M72 696.5h5M74.5 694v5 M84 683.5h5M86.5 681v5 M101 670.5h5M103.5 668v5 M108 665.5h5M110.5 663v5 M132 648.5h5M134.5 646v5 M168 630.5h5M170.5 628v5 M215 611.5h5M217.5 609v5 M269 587.5h5M271.5 585v5 M269 560.5h5M271.5 558v5 M245 529.5h5M247.5 527v5 M257 493.5h5M259.5 491v5 M335 450.5h5M337.5 448v5 M341 395.5h5M343.5 393v5 M359 321.5h5M361.5 319v5 M210 219.5h5M212.5 217v5" stroke="#fff" stroke-width="1" fill="none"/>
<path clip-path="url(#pc)" d="M153 726.5h5M155.5 724v5 M144 722.5h5M146.5 720v5 M133 713.5h5M135.5 711v5 M130 706.5h5M132.5 704v5 M134 697.5h5M136.5 695v5 M123 683.5h5M125.5 681v5 M116 670.5h5M118.5 668v5 M118 665.5h5M120.5 663v5 M124 630.5h5M126.5 628v5 M152 611.5h5M154.5 609v5 M204 587.5h5M206.5 585v5 M209 560.5h5M211.5 558v5 M184 529.5h5M186.5 527v5 M194 493.5h5M196.5 491v5 M273 450.5h5M275.5 448v5 M291 395.5h5M293.5 393v5 M308 321.5h5M310.5 319v5 M154 219.5h5M156.5 217v5" stroke="#fff" stroke-width="1" fill="none"/>
<polyline clip-path="url(#pc)" points="92.1,726.9 85.5,722.1 79.5,713.9 74.1,706 74.5,696.1 86.3,683.7 103.7,670.8 110,665.7 134,648.7 170,630.5 217.9,611.2 271.1,587.5 271.1,560.5 247.5,529.5 259.9,493.1 337.8,450.4 343.7,395.2 361.5,321.5 212.1,219.5 110.2,51.5" stroke="#00ff00" stroke-width="1" fill="none" stroke-linejoin="round" />
<polyline clip-path="url(#pc)" points="155.8,726.9 146.8,722.1 135.3,713.9 132.5,706 136.5,697.2 125.8,683.7 118.4,670.8 120.3,665.7 116.8,655 126.2,630.8 154.7,611.2 206.5,587.5 211.5,560.5 186.9,529.5 197,493.5 275.2,450.4 293.1,395.2 311,321.5 156.8,219.5 114,51.5" stroke="#ff0080" stroke-width="1" fill="none" stroke-linejoin="round" />
<polyline clip-path="url(#pc)" points="62.5,648.7 99.7,665.3 72.1,670.8 74.5,683.7 83.9,697.2 118.7,706 156.5,713.9 239.7,721.7 287.2,726.6" stroke="#f07800" stroke-width="1" fill="none" stroke-linejoin="round" />
<path clip-path="url(#pc)" d="M97 665.5h5M99.5 663v5 M70 670.5h5M72.5 668v5 M72 683.5h5M74.5 681v5 M81 697.5h5M83.5 695v5 M116 706.5h5M118.5 704v5 M154 713.5h5M156.5 711v5 M237 721.5h5M239.5 719v5 M285 726.5h5M287.5 724v5" stroke="#fff" stroke-width="1" fill="none"/>
<polyline clip-path="url(#pc)" points="62.5,653.5 62.5,661.5 63.5,665.1 661.5,698.1" stroke="#ffff00" stroke-width="1" fill="none" stroke-linejoin="round" />
<polyline clip-path="url(#pc)" points="612,726.6 661.5,721.2" stroke="#ffff00" stroke-width="1" fill="none" stroke-linejoin="round" />
<path clip-path="url(#pc)" d="M162 670.5h5M164.5 668v5 M385 683.5h5M387.5 681v5 M610 726.5h5M612.5 724v5" stroke="#fff" stroke-width="1" fill="none"/>
<polyline clip-path="url(#pc)" points="211.9,726.6 209,722.2 206.5,713.9 210.5,706.5 227.5,696.8 240.3,684.1 251.9,670.8 255.7,667 271,650.1" stroke="#c8c800" stroke-width="1" fill="none" stroke-linejoin="round" />
<path clip-path="url(#pc)" d="M209 726.5h5M211.5 724v5 M206 722.5h5M208.5 720v5 M204 713.5h5M206.5 711v5 M208 706.5h5M210.5 704v5 M225 696.5h5M227.5 694v5 M238 684.5h5M240.5 682v5 M249 670.5h5M251.5 668v5 M253 666.5h5M255.5 664v5" stroke="#fff" stroke-width="1" fill="none"/>
<rect x="213" y="699" width="7" height="7" fill="#c8c800"/>
<text x="216.5" y="706" font-size="9" fill="#202000" text-anchor="middle">1</text>
<rect x="242" y="674" width="7" height="7" fill="#c8c800"/>
<text x="245.5" y="681" font-size="9" fill="#202000" text-anchor="middle">2</text>
<rect x="267" y="646" width="7" height="7" fill="#c8c800"/>
<text x="270.5" y="653" font-size="9" fill="#202000" text-anchor="middle">3</text>
<rect x="67.5" y="607.5" width="43" height="17" fill="#000" stroke="#ffff00" stroke-width="1"/>
<text x="89" y="621" font-size="12.5" fill="#ffff00" text-anchor="middle">CAPE</text>
<rect x="67.5" y="636.5" width="57" height="17" fill="#000" stroke="#f07800" stroke-width="1"/>
<text x="96" y="650" font-size="12.5" fill="#f07800" text-anchor="middle">CINH * 5</text>
<rect x="626" y="688" width="29" height="16" fill="#000" stroke="#ff00ff" stroke-width="2"/>
<text x="640.5" y="700.5" font-size="12.5" fill="#ff00ff" text-anchor="middle">LCL</text>
<text x="52.3" y="55" font-size="12" fill="#fff" text-anchor="end">100</text>
<text x="671" y="55" font-size="12.2" fill="#fff">16573m</text>
<text x="52.3" y="326" font-size="12" fill="#fff" text-anchor="end">200</text>
<text x="671" y="326" font-size="12.2" fill="#fff">12195m</text>
<text x="52.3" y="454" font-size="12" fill="#fff" text-anchor="end">300</text>
<text x="671" y="454" font-size="12.2" fill="#fff">9552m</text>
<text x="52.3" y="534" font-size="12" fill="#fff" text-anchor="end">400</text>
<text x="671" y="534" font-size="12.2" fill="#fff">7512m</text>
<text x="52.3" y="591" font-size="12" fill="#fff" text-anchor="end">500</text>
<text x="671" y="591" font-size="12.2" fill="#fff">5832m</text>
<text x="52.3" y="635" font-size="12" fill="#fff" text-anchor="end">600</text>
<text x="671" y="635" font-size="12.2" fill="#fff">4412m</text>
<text x="52.3" y="670" font-size="12" fill="#fff" text-anchor="end">700</text>
<text x="671" y="670" font-size="12.2" fill="#fff">3161m</text>
<text x="52.3" y="699" font-size="12" fill="#fff" text-anchor="end">800</text>
<text x="671" y="699" font-size="12.2" fill="#fff">2056m</text>
<text x="52.3" y="724" font-size="12" fill="#fff" text-anchor="end">900</text>
<text x="671" y="724" font-size="12.2" fill="#fff">1064m</text>
<text x="52.3" y="745" font-size="12" fill="#fff" text-anchor="end">1000</text>
<text x="59" y="767" font-size="12" fill="#fff" text-anchor="middle">-50</text>
<text x="119" y="767" font-size="12" fill="#fff" text-anchor="middle">-40</text>
<text x="179" y="767" font-size="12" fill="#fff" text-anchor="middle">-30</text>
<text x="239" y="767" font-size="12" fill="#fff" text-anchor="middle">-20</text>
<text x="299" y="767" font-size="12" fill="#fff" text-anchor="middle">-10</text>
<text x="361" y="767" font-size="12" fill="#fff" text-anchor="middle">0</text>
<text x="421" y="767" font-size="12" fill="#fff" text-anchor="middle">10</text>
<text x="481" y="767" font-size="12" fill="#fff" text-anchor="middle">20</text>
<text x="541" y="767" font-size="12" fill="#fff" text-anchor="middle">30</text>
<text x="601" y="767" font-size="12" fill="#fff" text-anchor="middle">40</text>
<text x="661" y="767" font-size="12" fill="#fff" text-anchor="middle">50</text>
<text x="277" y="780.5" font-size="12" fill="#fff" textLength="170" lengthAdjust="spacing" xml:space="preserve">Temperature, Dewpoint  [ °C ]</text>
<text x="61" y="805.5" font-size="12" fill="#fff" text-anchor="middle">0</text>
<text x="121" y="805.5" font-size="12" fill="#fff" text-anchor="middle">10</text>
<text x="181" y="805.5" font-size="12" fill="#fff" text-anchor="middle">20</text>
<text x="241" y="805.5" font-size="12" fill="#fff" text-anchor="middle">30</text>
<text x="301" y="805.5" font-size="12" fill="#fff" text-anchor="middle">40</text>
<text x="361" y="805.5" font-size="12" fill="#fff" text-anchor="middle">50</text>
<text x="421" y="805.5" font-size="12" fill="#fff" text-anchor="middle">60</text>
<text x="481" y="805.5" font-size="12" fill="#fff" text-anchor="middle">70</text>
<text x="541" y="805.5" font-size="12" fill="#fff" text-anchor="middle">80</text>
<text x="601" y="805.5" font-size="12" fill="#fff" text-anchor="middle">90</text>
<text x="661" y="805.5" font-size="12" fill="#fff" text-anchor="middle">100</text>
<text x="307" y="818.5" font-size="12" fill="#fff" textLength="106" lengthAdjust="spacing" xml:space="preserve">Windspeed  [ knt ]</text>
<text x="61" y="843" font-size="12" fill="#fff" text-anchor="middle">0</text>
<text x="121" y="843" font-size="12" fill="#fff" text-anchor="middle">300</text>
<text x="181" y="843" font-size="12" fill="#fff" text-anchor="middle">600</text>
<text x="241" y="843" font-size="12" fill="#fff" text-anchor="middle">900</text>
<text x="301" y="843" font-size="12" fill="#fff" text-anchor="middle">1200</text>
<text x="361" y="843" font-size="12" fill="#fff" text-anchor="middle">1500</text>
<text x="421" y="843" font-size="12" fill="#fff" text-anchor="middle">1800</text>
<text x="481" y="843" font-size="12" fill="#fff" text-anchor="middle">2100</text>
<text x="541" y="843" font-size="12" fill="#fff" text-anchor="middle">2400</text>
<text x="601" y="843" font-size="12" fill="#fff" text-anchor="middle">2700</text>
<text x="661" y="843" font-size="12" fill="#fff" text-anchor="middle">3000</text>
<text x="293" y="856.5" font-size="12" fill="#fff" textLength="136" lengthAdjust="spacing" xml:space="preserve">CAPE, CINH * 5  [ J/kg ]</text>
<text x="59" y="880" font-size="12" fill="#fff" text-anchor="middle">-100</text>
<text x="134" y="880" font-size="12" fill="#fff" text-anchor="middle">-50</text>
<text x="211" y="880" font-size="12" fill="#fff" text-anchor="middle">0</text>
<text x="286" y="880" font-size="12" fill="#fff" text-anchor="middle">50</text>
<text x="361" y="880" font-size="12" fill="#fff" text-anchor="middle">100</text>
<text x="436" y="880" font-size="12" fill="#fff" text-anchor="middle">150</text>
<text x="511" y="880" font-size="12" fill="#fff" text-anchor="middle">200</text>
<text x="586" y="880" font-size="12" fill="#fff" text-anchor="middle">250</text>
<text x="661" y="880" font-size="12" fill="#fff" text-anchor="middle">300</text>
<text x="260" y="892.5" font-size="12" fill="#fff" textLength="203" lengthAdjust="spacing" xml:space="preserve">Storm Relative Helicity  [ m^2/s^2 ]</text>
<text x="62" y="29" font-size="16" font-weight="bold" fill="#fff">Station:</text>
<text x="129" y="29" font-size="16" font-weight="bold" fill="#fff">Schüpfheim</text>
<text x="245" y="29" font-size="16" font-weight="bold" fill="#fff">Date:</text>
<text x="293" y="29" font-size="16" font-weight="bold" fill="#fff">19.06.2021</text>
<text x="395" y="29" font-size="16" font-weight="bold" fill="#fff">Time:</text>
<text x="443" y="29" font-size="16" font-weight="bold" fill="#fff">1250Z</text>
<text x="761" y="32" font-size="13" font-weight="bold" fill="#00ff00" text-anchor="middle">OBS</text>
<text x="826.5" y="32" font-size="13" font-weight="bold" fill="#ff0080" text-anchor="middle">SR</text>
<path d="M761.5 40V770" stroke="#00ff00" stroke-width="1"/>
<path d="M826.5 40V770" stroke="#ff0080" stroke-width="1"/>
<path d="M761.5 219.1 L738.5 236.1 M761.5 321.5 L741.5 343.3 M761.5 394.7 L741.8 415.2 M761.5 450 L736.3 463 M761.5 494.2 L735.5 507.5 M761.5 530.4 L736.5 544.1 M761.5 561.1 L736.5 575.2 M761.5 586.8 L734.5 598 M761.5 610.6 L735.5 624.1 M761.5 630.9 L740.7 650.3 M761.5 649.1 L744.9 671.9 M761.5 666 L748.8 697.1 M761.5 668.5 L748.5 693.5 M826.5 219.1 L810.8 242.1 M826.5 321.5 L810.8 346 M826.5 394.7 L810.5 419.3 M826.5 450 L802.5 466.2 M826.5 494.2 L802.5 510 M826.5 530.5 L804.5 549.3 M826.5 561.1 L804.5 580.1 M826.5 586.8 L800.5 600.1 M826.5 610.5 L803.5 627.9 M826.5 630.9 L820.7 659.2 M761.5 683 V698 M761.5 691.5 L756.5 713 M761.5 698 L783 716 M761.5 721.5 L777 697.5 M761.5 726.5 L783 707 M826.5 648.6 L839 674 M826.5 665.5 L851.5 682.5 M826.5 670 L852 685 M826.5 683.5 L855 689.5 M826.5 696.5 L855.5 695.5 M826.5 705.5 L855 696 M826.5 713 L854 701.5 M826.5 721.5 L854 711 M826.5 726.5 L854 716.5" stroke="#fff" stroke-width="1" fill="none"/>
</g>
<g class="tb">
<text x="894" y="40" fill="#fff" text-decoration="underline">Parameter</text>
<text x="1064.2" y="40" fill="#fff" text-decoration="underline" textLength="59.8" lengthAdjust="spacing">Value LCL</text>
<text x="1152.1" y="40" fill="#fff" text-decoration="underline" textLength="61.4" lengthAdjust="spacing">Value CCL</text>
<text x="1230" y="40" fill="#fff" text-decoration="underline">Unit</text>
<text x="894" y="62" fill="#fff" textLength="140.63" lengthAdjust="spacing">Convective Temperature:</text>
<text x="1124" y="62" fill="#ff0000" text-anchor="end">33.68</text>
<text x="1230" y="62" fill="#fff" textLength="20.91" lengthAdjust="spacing">[°C]</text>
<text x="894" y="79" fill="#fff" textLength="92.3" lengthAdjust="spacing">Snowfall Height:</text>
<text x="1124" y="79" fill="#fff" text-anchor="end">3524.93</text>
<text x="1230" y="79" fill="#fff">[m]</text>
<text x="894" y="104" fill="#fff" text-decoration="underline" textLength="258.3" lengthAdjust="spacing">Parcels: Using 50mB mean layer LCL + CCL</text>
<text x="894" y="124" fill="#fff" textLength="69.08" lengthAdjust="spacing">Lifted Index:</text>
<text x="1124" y="124" fill="#ff0000" text-anchor="end">-9.05</text>
<text x="1213" y="124" fill="#ff0000" text-anchor="end">-11.45</text>
<text x="1230" y="124" fill="#fff" textLength="20.91" lengthAdjust="spacing">[°C]</text>
<text x="894" y="141" fill="#fff" textLength="61.22" lengthAdjust="spacing">CAPE ML:</text>
<text x="1124" y="141" fill="#ff0000" text-anchor="end">3016.44</text>
<text x="1213" y="141" fill="#ff0000" text-anchor="end">4309.90</text>
<text x="1230" y="141" fill="#fff" textLength="31.19" lengthAdjust="spacing">[J/kg]</text>
<text x="894" y="158" fill="#fff" textLength="146.98" lengthAdjust="spacing">CINH | LSI (LCL: 807mB):</text>
<text x="1124" y="158" fill="#ffff00" text-anchor="end">174.19</text>
<text x="1124" y="158" fill="#fff">,</text>
<text x="1135.7" y="158" fill="#ffff00">2.25</text>
<text x="1230" y="158" fill="#fff" textLength="61.55" lengthAdjust="spacing">[J/kg], [°C]</text>
<text x="894" y="175" fill="#fff" textLength="69.4" lengthAdjust="spacing">CAPE SFC:</text>
<text x="1124" y="175" fill="#ff0000" text-anchor="end">2747.64</text>
<text x="1213" y="175" fill="#ff0000" text-anchor="end">4246.24</text>
<text x="1230" y="175" fill="#fff" textLength="31.19" lengthAdjust="spacing">[J/kg]</text>
<text x="894" y="192" fill="#fff" textLength="128.5" lengthAdjust="spacing">CAPE MU | CINH MU:</text>
<text x="1124" y="192" fill="#ff0000" text-anchor="end">3534.77</text>
<text x="1124" y="192" fill="#fff">,</text>
<text x="1135.7" y="192" fill="#ff0000">94.77</text>
<text x="1230" y="192" fill="#fff" textLength="31.19" lengthAdjust="spacing">[J/kg]</text>
<text x="894" y="209" fill="#fff" textLength="159.63" lengthAdjust="spacing">3km SFC CAPE | IL CAPE:</text>
<text x="1124" y="209" fill="#00ff00" text-anchor="end">0.59</text>
<text x="1124" y="209" fill="#fff">,</text>
<text x="1135.7" y="209" fill="#ff0000">5826.13</text>
<text x="1230" y="209" fill="#fff" textLength="31.19" lengthAdjust="spacing">[J/kg]</text>
<text x="894" y="226" fill="#fff" textLength="141.38" lengthAdjust="spacing">DCAPE (LFS = 500mB):</text>
<text x="1124" y="226" fill="#ff0000" text-anchor="end">734.21</text>
<text x="1230" y="226" fill="#fff" textLength="31.19" lengthAdjust="spacing">[J/kg]</text>
<text x="894" y="243" fill="#fff" textLength="119.04" lengthAdjust="spacing">850-600 Lapse Rate:</text>
<text x="1124" y="243" fill="#ff0000" text-anchor="end">23.26</text>
<text x="1230" y="243" fill="#fff" textLength="20.91" lengthAdjust="spacing">[°C]</text>
<text x="894" y="260" fill="#fff" textLength="155.32" lengthAdjust="spacing">FM Hail Size | SHIP | LHP:</text>
<text x="1124" y="260" fill="#ff0000" text-anchor="end">3.8 - 5.1</text>
<text x="1124" y="260" fill="#fff">,</text>
<text x="1135.7" y="260" fill="#fff"><tspan fill="#ff0000">4.58</tspan>,</text>
<text x="1173" y="260" fill="#ff0000">27.05</text>
<text x="1230" y="260" fill="#fff" textLength="71.72" lengthAdjust="spacing">[cm], [1], [1]</text>
<text x="894" y="277" fill="#fff" textLength="146.27" lengthAdjust="spacing">Estofex Exp. Hail Param:</text>
<text x="1124" y="277" fill="#ff0000" text-anchor="end">7.42</text>
<text x="1230" y="277" fill="#fff" textLength="25.59" lengthAdjust="spacing">[cm]</text>
<text x="894" y="294" fill="#fff" textLength="172.42" lengthAdjust="spacing">Max. Hail Size (OLD, MU, IL):</text>
<text x="1124" y="294" fill="#ff0000" text-anchor="end">5.29</text>
<text x="1124" y="294" fill="#fff">,</text>
<text x="1135.7" y="294" fill="#fff"><tspan fill="#ff0000">6.41</tspan>,</text>
<text x="1173" y="294" fill="#ff0000">15.84</text>
<text x="1230" y="294" fill="#fff" textLength="25.59" lengthAdjust="spacing">[cm]</text>
<text x="894" y="314" fill="#fff" textLength="101.4" lengthAdjust="spacing">LCL / CCL (AGL):</text>
<text x="1124" y="314" fill="#ffff00" text-anchor="end">1246.13</text>
<text x="1213" y="314" fill="#ffff00" text-anchor="end">1963.99</text>
<text x="1230" y="314" fill="#fff">[m]</text>
<text x="894" y="331" fill="#fff" textLength="105.11" lengthAdjust="spacing">Convective Height:</text>
<text x="1124" y="331" fill="#ff0000" text-anchor="end">10.80</text>
<text x="1213" y="331" fill="#ff0000" text-anchor="end">10.42</text>
<text x="1230" y="331" fill="#fff" textLength="25.59" lengthAdjust="spacing">[km]</text>
<text x="894" y="356" fill="#fff" text-decoration="underline">Convective Indices</text>
<text x="894" y="376" fill="#fff" textLength="94.91" lengthAdjust="spacing">Showalter Index:</text>
<text x="1124" y="376" fill="#ff0000" text-anchor="end">-9.98</text>
<text x="1230" y="376" fill="#fff" textLength="20.91" lengthAdjust="spacing">[°C]</text>
<text x="894" y="393" fill="#fff" textLength="150.36" lengthAdjust="spacing">Modified Thompson Index:</text>
<text x="1124" y="393" fill="#ff0000" text-anchor="end">52.14</text>
<text x="1230" y="393" fill="#fff" textLength="20.91" lengthAdjust="spacing">[°C]</text>
<text x="894" y="410" fill="#fff" textLength="105.43" lengthAdjust="spacing">Total Totals Index:</text>
<text x="1124" y="410" fill="#ff0000" text-anchor="end">63.41</text>
<text x="1230" y="410" fill="#fff" textLength="20.91" lengthAdjust="spacing">[°C]</text>
<text x="894" y="427" fill="#fff" textLength="56.92" lengthAdjust="spacing">KO Index:</text>
<text x="1124" y="427" fill="#ff0000" text-anchor="end">-30.10</text>
<text x="1230" y="427" fill="#fff">[1]</text>
<text x="894" y="444" fill="#fff" textLength="122.87" lengthAdjust="spacing">Craven SigSvr / 1000:</text>
<text x="1124" y="444" fill="#ff0000" text-anchor="end">61.17</text>
<text x="1230" y="444" fill="#fff" textLength="53.11" lengthAdjust="spacing">[m^3/s^3]</text>
<text x="894" y="461" fill="#fff" textLength="114.35" lengthAdjust="spacing">SCP RM (new, old):</text>
<text x="1124" y="461" fill="#ff0000" text-anchor="end">2.04</text>
<text x="1124" y="461" fill="#fff">,</text>
<text x="1135.7" y="461" fill="#ffff00">1.09</text>
<text x="1230" y="461" fill="#fff">[1]</text>
<text x="894" y="478" fill="#fff" textLength="88.51" lengthAdjust="spacing">STP (new, old):</text>
<text x="1124" y="478" fill="#ff0000" text-anchor="end">0.29</text>
<text x="1124" y="478" fill="#fff">,</text>
<text x="1135.7" y="478" fill="#00ff00">0.05</text>
<text x="1230" y="478" fill="#fff">[1]</text>
<text x="894" y="495" fill="#fff" textLength="136.12" lengthAdjust="spacing">SB STP (fix) | CWASP:</text>
<text x="1124" y="495" fill="#00ff00" text-anchor="end">0.05</text>
<text x="1124" y="495" fill="#fff">,</text>
<text x="1135.7" y="495" fill="#ffff00">54.55</text>
<text x="1230" y="495" fill="#fff" textLength="42.72" lengthAdjust="spacing">[1], [%]</text>
<text x="894" y="512" fill="#fff" textLength="112.54" lengthAdjust="spacing">DCP | MMP | MSP:</text>
<text x="1124" y="512" fill="#ff0000" text-anchor="end">1.89</text>
<text x="1124" y="512" fill="#fff">,</text>
<text x="1135.7" y="512" fill="#fff"><tspan fill="#ff0000">95.37</tspan>,</text>
<text x="1179.5" y="512" fill="#00ff00">44.82</text>
<text x="1230" y="512" fill="#fff" textLength="70.78" lengthAdjust="spacing">[1], [%], [%]</text>
<text x="894" y="529" fill="#fff" textLength="126.28" lengthAdjust="spacing">MB Comp | SHERBE:</text>
<text x="1124" y="529" fill="#00ff00" text-anchor="end">0.00</text>
<text x="1124" y="529" fill="#fff">,</text>
<text x="1135.7" y="529" fill="#ff0000">1.25</text>
<text x="1230" y="529" fill="#fff" textLength="37.69" lengthAdjust="spacing">[1], [1]</text>
<text x="894" y="546" fill="#fff" textLength="145.53" lengthAdjust="spacing">Exp. Supercell Index CH:</text>
<text x="1124" y="546" fill="#ff0000" text-anchor="end">5.94</text>
<text x="1230" y="546" fill="#fff">[1]</text>
<text x="894" y="563" fill="#fff" textLength="99.59" lengthAdjust="spacing">SWISS 12 Index:</text>
<text x="1124" y="563" fill="#ff0000" text-anchor="end">-10.41</text>
<text x="1230" y="563" fill="#fff">[1]</text>
<text x="894" y="580" fill="#fff" textLength="110.19" lengthAdjust="spacing">Precipitable Water:</text>
<text x="1124" y="580" fill="#ff0000" text-anchor="end">34.45</text>
<text x="1230" y="580" fill="#fff" textLength="29.82" lengthAdjust="spacing">[mm]</text>
<text x="894" y="605" fill="#fff" text-decoration="underline">Wind Parameters</text>
<text x="894" y="625" fill="#fff" textLength="143.36" lengthAdjust="spacing">Storm Direction | Motion:</text>
<text x="1124" y="625" fill="#fff" text-anchor="end">260.88</text>
<text x="1124" y="625" fill="#fff">,</text>
<text x="1135.7" y="625" fill="#00ff00">11.21</text>
<text x="1230" y="625" fill="#fff" textLength="46.41" lengthAdjust="spacing">[°], [knt]</text>
<text x="894" y="642" fill="#fff" textLength="116.62" lengthAdjust="spacing">500m Critical Angle:</text>
<text x="1124" y="642" fill="#00ff00" text-anchor="end">346.51</text>
<text x="1230" y="642" fill="#fff">[°]</text>
<text x="894" y="662" fill="#fff" textLength="107.68" lengthAdjust="spacing">SR Wind Sfc-2km:</text>
<text x="1124" y="662" fill="#ffff00" text-anchor="end">11.98</text>
<text x="1230" y="662" fill="#fff" textLength="25.5" lengthAdjust="spacing">[knt]</text>
<text x="894" y="679" fill="#fff" textLength="113.43" lengthAdjust="spacing">SR Wind 4km-6km:</text>
<text x="1124" y="679" fill="#ff0000" text-anchor="end">20.25</text>
<text x="1230" y="679" fill="#fff" textLength="25.5" lengthAdjust="spacing">[knt]</text>
<text x="894" y="696" fill="#fff" textLength="120.6" lengthAdjust="spacing">SR Wind 9km-11km:</text>
<text x="1124" y="696" fill="#ff0000" text-anchor="end">37.62</text>
<text x="1230" y="696" fill="#fff" textLength="47.34" lengthAdjust="spacing">[knt] HP</text>
<text x="894" y="716" fill="#fff" textLength="121.3" lengthAdjust="spacing">Effective Shear 6000:</text>
<text x="1124" y="716" fill="#ff0000" text-anchor="end">39.42</text>
<text x="1230" y="716" fill="#fff" textLength="25.5" lengthAdjust="spacing">[knt]</text>
<text x="894" y="736" fill="#fff" textLength="147.1" lengthAdjust="spacing">Bulk Richardson Number:</text>
<text x="1124" y="736" fill="#ffff00" text-anchor="end">96.77</text>
<text x="1213" y="736" fill="#ffff00" text-anchor="end">138.27</text>
<text x="1230" y="736" fill="#fff">[1]</text>
<text x="894" y="756" fill="#fff" textLength="111.03" lengthAdjust="spacing">3km Effective SRH:</text>
<text x="1124" y="756" fill="#00ff00" text-anchor="end">39.61</text>
<text x="1230" y="756" fill="#fff" textLength="53.11" lengthAdjust="spacing">[m^2/s^2]</text>
<text x="894" y="773" fill="#fff" textLength="173.65" lengthAdjust="spacing">Max 3km SRH (0-2km) | AGL:</text>
<text x="1124" y="773" fill="#00ff00" text-anchor="end">98.81</text>
<text x="1124" y="773" fill="#fff">,</text>
<text x="1135.7" y="773" fill="#00ff00">2000.00</text>
<text x="1230" y="773" fill="#fff" textLength="80.73" lengthAdjust="spacing">[m^2/s^2], [m]</text>
<text x="894" y="793" fill="#fff" textLength="155.33" lengthAdjust="spacing">3km Energy Helicity Index:</text>
<text x="1124" y="793" fill="#00ff00" text-anchor="end">0.75</text>
<text x="1213" y="793" fill="#00ff00" text-anchor="end">1.07</text>
<text x="1230" y="793" fill="#fff">[1]</text>
<text x="894" y="810" fill="#fff" textLength="140.93" lengthAdjust="spacing">3km Vorticity Gen. Pot.:</text>
<text x="1124" y="810" fill="#ff0000" text-anchor="end">0.16</text>
<text x="1213" y="810" fill="#ff0000" text-anchor="end">0.19</text>
<text x="1230" y="810" fill="#fff" textLength="41.47" lengthAdjust="spacing">[m/s^2]</text>
<rect x="729" y="827" width="15" height="8" fill="#ff0000"/>
<text x="753" y="835.5" fill="#ff0000" textLength="112" lengthAdjust="spacing">Temperature Profile</text>
<rect x="729" y="847" width="15" height="8" fill="#00ffff"/>
<text x="753" y="855.5" fill="#00ffff" textLength="92.7" lengthAdjust="spacing">Dewpoint Profile</text>
<rect x="729" y="867" width="15" height="8" fill="#00ff00"/>
<text x="753" y="875.5" fill="#00ff00" textLength="136.6" lengthAdjust="spacing">OBS Windspeed Profile</text>
<rect x="729" y="887" width="15" height="8" fill="#ff0080"/>
<text x="753" y="895.5" fill="#ff0080" textLength="126.8" lengthAdjust="spacing">SR Windspeed Profile</text>
<rect x="729" y="907" width="15" height="8" fill="#c8c800"/>
<text x="753" y="915.5" fill="#c8c800" textLength="222.9" lengthAdjust="spacing">Sfc-3km Storm Relative Helicity Profile</text>
<rect x="729" y="927" width="15" height="8" fill="#484400"/>
<text x="753" y="935.5" fill="#484400" textLength="205.8" lengthAdjust="spacing">Effective Layer (CAPE &gt;= 100 J/kg)</text>
<rect x="1079" y="827" width="15" height="8" fill="#00ff00"/>
<text x="1103" y="835.5" fill="#00ff00" textLength="183.4" lengthAdjust="spacing">No / Non Severe Thunderstorms</text>
<rect x="1079" y="847" width="15" height="8" fill="#ffff00"/>
<text x="1103" y="855.5" fill="#ffff00" textLength="211.7" lengthAdjust="spacing">Scattered / Moderate Thunderstorms</text>
<rect x="1079" y="867" width="15" height="8" fill="#ff0000"/>
<text x="1103" y="875.5" fill="#ff0000" textLength="209.8" lengthAdjust="spacing">Widespread / Severe Thunderstorms</text>
</g>
</svg>
</body></html>
